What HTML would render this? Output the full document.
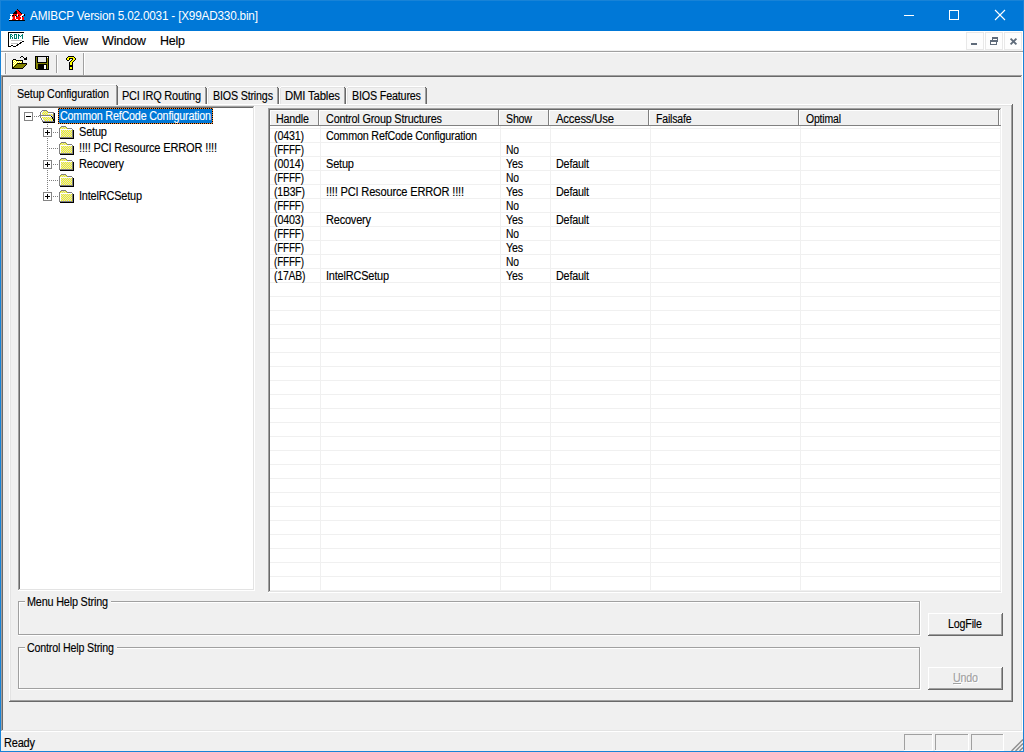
<!DOCTYPE html>
<html>
<head>
<meta charset="utf-8">
<title>AMIBCP Version 5.02.0031 - [X99AD330.bin]</title>
<style>
html,body{margin:0;padding:0;}
body{width:1024px;height:752px;overflow:hidden;background:#f0f0f0;position:relative;
  font-family:"Liberation Sans",sans-serif;font-size:12px;color:#000;}
div,span{box-sizing:border-box;}
.abs{position:absolute;}
.t{position:absolute;white-space:nowrap;line-height:13px;transform-origin:0 0;letter-spacing:-0.2px;-webkit-text-stroke:0.14px currentColor;}
.r{position:absolute;}
</style>
</head>
<body>

<div class="r" style="left:0px;top:0px;width:1024px;height:31px;background:#0078d7;"></div>
<svg class="abs" style="left:9px;top:9px" width="16" height="12" viewBox="0 0 16 12" shape-rendering="crispEdges" ><rect x="8" y="0" width="1" height="1" fill="#000000"/><rect x="7" y="1" width="2" height="1" fill="#ff0000"/><rect x="9" y="1" width="1" height="1" fill="#000000"/><rect x="6" y="2" width="2" height="1" fill="#000000"/><rect x="8" y="2" width="2" height="1" fill="#ff0000"/><rect x="10" y="2" width="1" height="1" fill="#000000"/><rect x="5" y="3" width="3" height="1" fill="#000000"/><rect x="8" y="3" width="3" height="1" fill="#ff0000"/><rect x="11" y="3" width="1" height="1" fill="#000000"/><rect x="4" y="4" width="4" height="1" fill="#000000"/><rect x="8" y="4" width="4" height="1" fill="#ff0000"/><rect x="12" y="4" width="1" height="1" fill="#000000"/><rect x="1" y="5" width="3" height="1" fill="#ffffff"/><rect x="4" y="5" width="4" height="1" fill="#ff0000"/><rect x="8" y="5" width="1" height="1" fill="#ffffff"/><rect x="9" y="5" width="4" height="1" fill="#ff0000"/><rect x="13" y="5" width="2" height="1" fill="#ffffff"/><rect x="15" y="5" width="1" height="1" fill="#000000"/><rect x="2" y="6" width="1" height="1" fill="#ffffff"/><rect x="3" y="6" width="2" height="1" fill="#000000"/><rect x="5" y="6" width="1" height="1" fill="#ff0000"/><rect x="6" y="6" width="1" height="1" fill="#000000"/><rect x="7" y="6" width="1" height="1" fill="#ff0000"/><rect x="8" y="6" width="1" height="1" fill="#ffffff"/><rect x="9" y="6" width="1" height="1" fill="#000000"/><rect x="10" y="6" width="2" height="1" fill="#ff0000"/><rect x="12" y="6" width="2" height="1" fill="#ffffff"/><rect x="14" y="6" width="1" height="1" fill="#0078d7"/><rect x="15" y="6" width="1" height="1" fill="#000000"/><rect x="1" y="7" width="2" height="1" fill="#ffffff"/><rect x="3" y="7" width="3" height="1" fill="#ff0000"/><rect x="6" y="7" width="1" height="1" fill="#ffffff"/><rect x="7" y="7" width="1" height="1" fill="#000000"/><rect x="8" y="7" width="1" height="1" fill="#0078d7"/><rect x="9" y="7" width="2" height="1" fill="#ff0000"/><rect x="11" y="7" width="2" height="1" fill="#ffffff"/><rect x="13" y="7" width="1" height="1" fill="#000000"/><rect x="1" y="8" width="2" height="1" fill="#ffffff"/><rect x="3" y="8" width="1" height="1" fill="#c0c0c0"/><rect x="4" y="8" width="2" height="1" fill="#ff0000"/><rect x="6" y="8" width="1" height="1" fill="#ffffff"/><rect x="7" y="8" width="5" height="1" fill="#ff0000"/><rect x="12" y="8" width="1" height="1" fill="#ffffff"/><rect x="13" y="8" width="2" height="1" fill="#ff0000"/><rect x="1" y="9" width="2" height="1" fill="#ffffff"/><rect x="3" y="9" width="1" height="1" fill="#c0c0c0"/><rect x="4" y="9" width="2" height="1" fill="#ff0000"/><rect x="6" y="9" width="1" height="1" fill="#ffffff"/><rect x="7" y="9" width="5" height="1" fill="#ff0000"/><rect x="12" y="9" width="1" height="1" fill="#ffffff"/><rect x="13" y="9" width="2" height="1" fill="#ff0000"/><rect x="0" y="10" width="3" height="1" fill="#ffffff"/><rect x="3" y="10" width="4" height="1" fill="#ff0000"/><rect x="7" y="10" width="2" height="1" fill="#ffffff"/><rect x="9" y="10" width="2" height="1" fill="#ff0000"/><rect x="11" y="10" width="2" height="1" fill="#ffffff"/><rect x="13" y="10" width="2" height="1" fill="#ff0000"/><rect x="0" y="11" width="16" height="1" fill="#000000"/></svg>
<div class="t" style="left:30px;top:9px;font-size:12px;line-height:15px;color:#fff;-webkit-text-stroke:0;transform:scaleX(0.9802)">AMIBCP Version 5.02.0031 - [X99AD330.bin]</div>
<svg class="abs" style="left:900px;top:5px" width="110" height="20" viewBox="0 0 110 20" shape-rendering="crispEdges"><rect x="4" y="10" width="10" height="1" fill="#fff"/><rect x="49.5" y="5.5" width="9" height="9" fill="none" stroke="#fff" stroke-width="1"/><g shape-rendering="auto" stroke="#fff" stroke-width="1.1"><line x1="95" y1="5" x2="105" y2="15"/><line x1="105" y1="5" x2="95" y2="15"/></g></svg>
<div class="r" style="left:1px;top:31px;width:1022px;height:19px;background:#fff;"></div>
<svg class="abs" style="left:8px;top:32px" width="16" height="15" viewBox="0 0 16 15" shape-rendering="crispEdges" ><rect x="0" y="0" width="16" height="1" fill="#000000"/><rect x="0" y="1" width="1" height="1" fill="#000000"/><rect x="0" y="2" width="1" height="1" fill="#000000"/><rect x="2" y="2" width="2" height="1" fill="#008070"/><rect x="6" y="2" width="3" height="1" fill="#008070"/><rect x="10" y="2" width="1" height="1" fill="#008070"/><rect x="14" y="2" width="1" height="1" fill="#008070"/><rect x="0" y="3" width="1" height="1" fill="#000000"/><rect x="2" y="3" width="1" height="1" fill="#008070"/><rect x="4" y="3" width="1" height="1" fill="#008070"/><rect x="6" y="3" width="1" height="1" fill="#008070"/><rect x="8" y="3" width="1" height="1" fill="#008070"/><rect x="10" y="3" width="2" height="1" fill="#008070"/><rect x="13" y="3" width="2" height="1" fill="#008070"/><rect x="0" y="4" width="1" height="1" fill="#000000"/><rect x="2" y="4" width="2" height="1" fill="#008070"/><rect x="6" y="4" width="1" height="1" fill="#008070"/><rect x="8" y="4" width="1" height="1" fill="#008070"/><rect x="10" y="4" width="1" height="1" fill="#008070"/><rect x="12" y="4" width="1" height="1" fill="#008070"/><rect x="14" y="4" width="1" height="1" fill="#008070"/><rect x="0" y="5" width="1" height="1" fill="#000000"/><rect x="2" y="5" width="1" height="1" fill="#008070"/><rect x="4" y="5" width="1" height="1" fill="#008070"/><rect x="6" y="5" width="1" height="1" fill="#008070"/><rect x="8" y="5" width="1" height="1" fill="#008070"/><rect x="10" y="5" width="1" height="1" fill="#008070"/><rect x="14" y="5" width="1" height="1" fill="#008070"/><rect x="0" y="6" width="1" height="1" fill="#000000"/><rect x="2" y="6" width="1" height="1" fill="#008070"/><rect x="4" y="6" width="1" height="1" fill="#008070"/><rect x="6" y="6" width="3" height="1" fill="#008070"/><rect x="10" y="6" width="1" height="1" fill="#008070"/><rect x="14" y="6" width="1" height="1" fill="#008070"/><rect x="0" y="7" width="1" height="1" fill="#000000"/><rect x="0" y="8" width="1" height="1" fill="#000000"/><rect x="3" y="8" width="11" height="1" fill="#c0c0c0"/><rect x="0" y="9" width="1" height="1" fill="#000000"/><rect x="14" y="9" width="2" height="1" fill="#000000"/><rect x="0" y="10" width="1" height="1" fill="#000000"/><rect x="12" y="10" width="2" height="1" fill="#000000"/><rect x="0" y="11" width="1" height="1" fill="#000000"/><rect x="3" y="11" width="7" height="1" fill="#c0c0c0"/><rect x="11" y="11" width="2" height="1" fill="#000000"/><rect x="0" y="12" width="1" height="1" fill="#000000"/><rect x="9" y="12" width="2" height="1" fill="#000000"/><rect x="0" y="13" width="1" height="1" fill="#000000"/><rect x="3" y="13" width="2" height="1" fill="#000000"/><rect x="8" y="13" width="2" height="1" fill="#000000"/><rect x="0" y="14" width="3" height="1" fill="#000000"/><rect x="5" y="14" width="3" height="1" fill="#000000"/></svg>
<div class="t" style="left:31.6px;top:34px;font-size:12px;line-height:15px;transform:scaleX(0.9282)">File</div>
<div class="t" style="left:63px;top:34px;font-size:12px;line-height:15px;transform:scaleX(0.9921)">View</div>
<div class="t" style="left:102px;top:34px;font-size:12px;line-height:15px;transform:scaleX(1.0556)">Window</div>
<div class="t" style="left:160px;top:34px;font-size:12px;line-height:15px;transform:scaleX(1.0377)">Help</div>
<div class="r" style="left:966px;top:32px;width:18px;height:18px;background:#fdfdfd;border:1px solid #e8e8e8"></div>
<div class="r" style="left:985px;top:32px;width:18px;height:18px;background:#fdfdfd;border:1px solid #e8e8e8"></div>
<div class="r" style="left:1004px;top:32px;width:18px;height:18px;background:#fdfdfd;border:1px solid #e8e8e8"></div>
<svg class="abs" style="left:966px;top:32px" width="56" height="18" viewBox="0 0 56 18"><g fill="#5f6b7a" shape-rendering="crispEdges"><rect x="5" y="11" width="6" height="2"/><rect x="26" y="5" width="6" height="2"/><rect x="31" y="5" width="1" height="5"/><rect x="26" y="5" width="1" height="3"/><rect x="24" y="8" width="7" height="5"/><rect x="25" y="10" width="5" height="2" fill="#fdfdfd"/></g><g stroke="#5f6b7a" stroke-width="1.9"><line x1="44.6" y1="6.6" x2="50.4" y2="12.4"/><line x1="50.4" y1="6.6" x2="44.6" y2="12.4"/></g></svg>
<div class="r" style="left:1px;top:51px;width:1022px;height:1px;background:#a0a0a0;"></div>
<div class="r" style="left:1px;top:52px;width:1022px;height:1px;background:#ffffff;"></div>
<div class="r" style="left:1px;top:53px;width:4px;height:22px;background:#f9f9f9;"></div>
<div class="r" style="left:5px;top:53px;width:1px;height:21px;background:#a0a0a0;"></div>
<div class="r" style="left:6px;top:53px;width:1px;height:21px;background:#f8f8f8;"></div>
<div class="r" style="left:1022px;top:53px;width:1px;height:22px;background:#ffffff;"></div>
<svg class="abs" style="left:12px;top:56px" width="15" height="13" viewBox="0 0 15 13" shape-rendering="crispEdges" ><rect x="9" y="0" width="2" height="1" fill="#000000"/><rect x="8" y="1" width="1" height="1" fill="#000000"/><rect x="11" y="1" width="1" height="1" fill="#000000"/><rect x="14" y="1" width="1" height="1" fill="#000000"/><rect x="12" y="2" width="3" height="1" fill="#000000"/><rect x="1" y="3" width="3" height="1" fill="#000000"/><rect x="12" y="3" width="3" height="1" fill="#000000"/><rect x="0" y="4" width="1" height="1" fill="#000000"/><rect x="1" y="4" width="1" height="1" fill="#ffff00"/><rect x="2" y="4" width="1" height="1" fill="#ffffff"/><rect x="3" y="4" width="1" height="1" fill="#ffff00"/><rect x="4" y="4" width="7" height="1" fill="#000000"/><rect x="0" y="5" width="1" height="1" fill="#000000"/><rect x="1" y="5" width="1" height="1" fill="#ffffff"/><rect x="2" y="5" width="1" height="1" fill="#ffff00"/><rect x="3" y="5" width="1" height="1" fill="#ffffff"/><rect x="4" y="5" width="1" height="1" fill="#ffff00"/><rect x="5" y="5" width="1" height="1" fill="#ffffff"/><rect x="6" y="5" width="1" height="1" fill="#ffff00"/><rect x="7" y="5" width="1" height="1" fill="#ffffff"/><rect x="8" y="5" width="1" height="1" fill="#ffff00"/><rect x="9" y="5" width="1" height="1" fill="#ffffff"/><rect x="10" y="5" width="1" height="1" fill="#000000"/><rect x="0" y="6" width="1" height="1" fill="#000000"/><rect x="1" y="6" width="1" height="1" fill="#ffff00"/><rect x="2" y="6" width="1" height="1" fill="#ffffff"/><rect x="3" y="6" width="1" height="1" fill="#ffff00"/><rect x="4" y="6" width="1" height="1" fill="#ffffff"/><rect x="5" y="6" width="1" height="1" fill="#ffff00"/><rect x="6" y="6" width="1" height="1" fill="#ffffff"/><rect x="7" y="6" width="1" height="1" fill="#ffff00"/><rect x="8" y="6" width="1" height="1" fill="#ffffff"/><rect x="9" y="6" width="1" height="1" fill="#ffff00"/><rect x="10" y="6" width="1" height="1" fill="#000000"/><rect x="0" y="7" width="1" height="1" fill="#000000"/><rect x="1" y="7" width="1" height="1" fill="#ffffff"/><rect x="2" y="7" width="1" height="1" fill="#ffff00"/><rect x="3" y="7" width="1" height="1" fill="#ffffff"/><rect x="4" y="7" width="1" height="1" fill="#ffff00"/><rect x="5" y="7" width="10" height="1" fill="#000000"/><rect x="0" y="8" width="1" height="1" fill="#000000"/><rect x="1" y="8" width="1" height="1" fill="#ffff00"/><rect x="2" y="8" width="1" height="1" fill="#ffffff"/><rect x="3" y="8" width="1" height="1" fill="#ffff00"/><rect x="4" y="8" width="1" height="1" fill="#000000"/><rect x="5" y="8" width="9" height="1" fill="#808000"/><rect x="14" y="8" width="1" height="1" fill="#000000"/><rect x="0" y="9" width="1" height="1" fill="#000000"/><rect x="1" y="9" width="1" height="1" fill="#ffffff"/><rect x="2" y="9" width="1" height="1" fill="#ffff00"/><rect x="3" y="9" width="1" height="1" fill="#000000"/><rect x="4" y="9" width="9" height="1" fill="#808000"/><rect x="13" y="9" width="1" height="1" fill="#000000"/><rect x="0" y="10" width="1" height="1" fill="#000000"/><rect x="1" y="10" width="1" height="1" fill="#ffff00"/><rect x="2" y="10" width="1" height="1" fill="#000000"/><rect x="3" y="10" width="9" height="1" fill="#808000"/><rect x="12" y="10" width="1" height="1" fill="#000000"/><rect x="0" y="11" width="2" height="1" fill="#000000"/><rect x="2" y="11" width="9" height="1" fill="#808000"/><rect x="11" y="11" width="1" height="1" fill="#000000"/><rect x="0" y="12" width="11" height="1" fill="#000000"/></svg>
<svg class="abs" style="left:35px;top:56px" width="14" height="14" viewBox="0 0 14 14" shape-rendering="crispEdges" ><rect x="0" y="0" width="14" height="1" fill="#000000"/><rect x="0" y="1" width="1" height="1" fill="#000000"/><rect x="1" y="1" width="1" height="1" fill="#808000"/><rect x="2" y="1" width="1" height="1" fill="#000000"/><rect x="3" y="1" width="8" height="1" fill="#e6e6e6"/><rect x="11" y="1" width="1" height="1" fill="#000000"/><rect x="12" y="1" width="1" height="1" fill="#ffffff"/><rect x="13" y="1" width="1" height="1" fill="#000000"/><rect x="0" y="2" width="1" height="1" fill="#000000"/><rect x="1" y="2" width="1" height="1" fill="#808000"/><rect x="2" y="2" width="1" height="1" fill="#000000"/><rect x="3" y="2" width="8" height="1" fill="#e6e6e6"/><rect x="11" y="2" width="1" height="1" fill="#000000"/><rect x="12" y="2" width="1" height="1" fill="#808000"/><rect x="13" y="2" width="1" height="1" fill="#000000"/><rect x="0" y="3" width="1" height="1" fill="#000000"/><rect x="1" y="3" width="1" height="1" fill="#808000"/><rect x="2" y="3" width="1" height="1" fill="#000000"/><rect x="3" y="3" width="8" height="1" fill="#e6e6e6"/><rect x="11" y="3" width="1" height="1" fill="#000000"/><rect x="12" y="3" width="1" height="1" fill="#808000"/><rect x="13" y="3" width="1" height="1" fill="#000000"/><rect x="0" y="4" width="1" height="1" fill="#000000"/><rect x="1" y="4" width="1" height="1" fill="#808000"/><rect x="2" y="4" width="1" height="1" fill="#000000"/><rect x="3" y="4" width="8" height="1" fill="#e6e6e6"/><rect x="11" y="4" width="1" height="1" fill="#000000"/><rect x="12" y="4" width="1" height="1" fill="#808000"/><rect x="13" y="4" width="1" height="1" fill="#000000"/><rect x="0" y="5" width="1" height="1" fill="#000000"/><rect x="1" y="5" width="1" height="1" fill="#808000"/><rect x="2" y="5" width="1" height="1" fill="#000000"/><rect x="3" y="5" width="8" height="1" fill="#e6e6e6"/><rect x="11" y="5" width="1" height="1" fill="#000000"/><rect x="12" y="5" width="1" height="1" fill="#808000"/><rect x="13" y="5" width="1" height="1" fill="#000000"/><rect x="0" y="6" width="1" height="1" fill="#000000"/><rect x="1" y="6" width="1" height="1" fill="#808000"/><rect x="2" y="6" width="10" height="1" fill="#000000"/><rect x="12" y="6" width="1" height="1" fill="#808000"/><rect x="13" y="6" width="1" height="1" fill="#000000"/><rect x="0" y="7" width="1" height="1" fill="#000000"/><rect x="1" y="7" width="12" height="1" fill="#808000"/><rect x="13" y="7" width="1" height="1" fill="#000000"/><rect x="0" y="8" width="1" height="1" fill="#000000"/><rect x="1" y="8" width="2" height="1" fill="#808000"/><rect x="3" y="8" width="9" height="1" fill="#000000"/><rect x="12" y="8" width="1" height="1" fill="#808000"/><rect x="13" y="8" width="1" height="1" fill="#000000"/><rect x="0" y="9" width="1" height="1" fill="#000000"/><rect x="1" y="9" width="2" height="1" fill="#808000"/><rect x="3" y="9" width="6" height="1" fill="#000000"/><rect x="9" y="9" width="2" height="1" fill="#ffffff"/><rect x="11" y="9" width="1" height="1" fill="#000000"/><rect x="12" y="9" width="1" height="1" fill="#808000"/><rect x="13" y="9" width="1" height="1" fill="#000000"/><rect x="0" y="10" width="1" height="1" fill="#000000"/><rect x="1" y="10" width="2" height="1" fill="#808000"/><rect x="3" y="10" width="6" height="1" fill="#000000"/><rect x="9" y="10" width="2" height="1" fill="#ffffff"/><rect x="11" y="10" width="1" height="1" fill="#000000"/><rect x="12" y="10" width="1" height="1" fill="#808000"/><rect x="13" y="10" width="1" height="1" fill="#000000"/><rect x="0" y="11" width="1" height="1" fill="#000000"/><rect x="1" y="11" width="2" height="1" fill="#808000"/><rect x="3" y="11" width="6" height="1" fill="#000000"/><rect x="9" y="11" width="2" height="1" fill="#ffffff"/><rect x="11" y="11" width="1" height="1" fill="#000000"/><rect x="12" y="11" width="1" height="1" fill="#808000"/><rect x="13" y="11" width="1" height="1" fill="#000000"/><rect x="0" y="12" width="1" height="1" fill="#000000"/><rect x="1" y="12" width="2" height="1" fill="#808000"/><rect x="3" y="12" width="6" height="1" fill="#000000"/><rect x="9" y="12" width="2" height="1" fill="#ffffff"/><rect x="11" y="12" width="1" height="1" fill="#000000"/><rect x="12" y="12" width="1" height="1" fill="#808000"/><rect x="13" y="12" width="1" height="1" fill="#000000"/><rect x="1" y="13" width="13" height="1" fill="#000000"/></svg>
<div class="r" style="left:56px;top:55px;width:1px;height:18px;background:#a0a0a0;"></div>
<div class="r" style="left:57px;top:55px;width:1px;height:18px;background:#ffffff;"></div>
<svg class="abs" style="left:66px;top:56px" width="10" height="14" viewBox="0 0 10 14" shape-rendering="crispEdges" ><rect x="2" y="0" width="6" height="1" fill="#000000"/><rect x="1" y="1" width="1" height="1" fill="#000000"/><rect x="2" y="1" width="6" height="1" fill="#ffff00"/><rect x="8" y="1" width="1" height="1" fill="#000000"/><rect x="0" y="2" width="1" height="1" fill="#000000"/><rect x="1" y="2" width="2" height="1" fill="#ffff00"/><rect x="3" y="2" width="4" height="1" fill="#000000"/><rect x="7" y="2" width="2" height="1" fill="#ffff00"/><rect x="9" y="2" width="1" height="1" fill="#000000"/><rect x="0" y="3" width="1" height="1" fill="#000000"/><rect x="1" y="3" width="2" height="1" fill="#ffff00"/><rect x="3" y="3" width="1" height="1" fill="#000000"/><rect x="6" y="3" width="1" height="1" fill="#000000"/><rect x="7" y="3" width="2" height="1" fill="#ffff00"/><rect x="9" y="3" width="1" height="1" fill="#000000"/><rect x="1" y="4" width="2" height="1" fill="#000000"/><rect x="5" y="4" width="1" height="1" fill="#000000"/><rect x="6" y="4" width="2" height="1" fill="#ffff00"/><rect x="8" y="4" width="1" height="1" fill="#000000"/><rect x="4" y="5" width="1" height="1" fill="#000000"/><rect x="5" y="5" width="2" height="1" fill="#ffff00"/><rect x="7" y="5" width="1" height="1" fill="#000000"/><rect x="3" y="6" width="1" height="1" fill="#000000"/><rect x="4" y="6" width="2" height="1" fill="#ffff00"/><rect x="6" y="6" width="1" height="1" fill="#000000"/><rect x="3" y="7" width="1" height="1" fill="#000000"/><rect x="4" y="7" width="2" height="1" fill="#ffff00"/><rect x="6" y="7" width="1" height="1" fill="#000000"/><rect x="3" y="8" width="1" height="1" fill="#000000"/><rect x="4" y="8" width="2" height="1" fill="#ffff00"/><rect x="6" y="8" width="1" height="1" fill="#000000"/><rect x="3" y="9" width="4" height="1" fill="#000000"/><rect x="3" y="10" width="4" height="1" fill="#000000"/><rect x="3" y="11" width="1" height="1" fill="#000000"/><rect x="4" y="11" width="2" height="1" fill="#ffff00"/><rect x="6" y="11" width="1" height="1" fill="#000000"/><rect x="3" y="12" width="1" height="1" fill="#000000"/><rect x="4" y="12" width="2" height="1" fill="#ffff00"/><rect x="6" y="12" width="1" height="1" fill="#000000"/><rect x="3" y="13" width="4" height="1" fill="#000000"/></svg>
<div class="r" style="left:83px;top:53px;width:1px;height:22px;background:#a0a0a0;"></div>
<div class="r" style="left:84px;top:53px;width:1px;height:22px;background:#ffffff;"></div>
<div class="r" style="left:1px;top:75px;width:1021px;height:1px;background:#a0a0a0;"></div><div class="r" style="left:1px;top:75px;width:1px;height:656px;background:#a0a0a0;"></div><div class="r" style="left:2px;top:76px;width:1019px;height:1px;background:#696969;"></div><div class="r" style="left:2px;top:76px;width:1px;height:654px;background:#696969;"></div><div class="r" style="left:1px;top:731px;width:1022px;height:1px;background:#ffffff;"></div><div class="r" style="left:1022px;top:75px;width:1px;height:657px;background:#ffffff;"></div><div class="r" style="left:2px;top:730px;width:1020px;height:1px;background:#e3e3e3;"></div><div class="r" style="left:1021px;top:76px;width:1px;height:655px;background:#e3e3e3;"></div>
<div class="r" style="left:9px;top:104px;width:1003px;height:1px;background:#ffffff;"></div><div class="r" style="left:9px;top:104px;width:1px;height:597px;background:#ffffff;"></div><div class="r" style="left:9px;top:701px;width:1004px;height:1px;background:#696969;"></div><div class="r" style="left:1012px;top:104px;width:1px;height:598px;background:#696969;"></div><div class="r" style="left:10px;top:700px;width:1002px;height:1px;background:#a0a0a0;"></div><div class="r" style="left:1011px;top:105px;width:1px;height:596px;background:#a0a0a0;"></div>
<div class="r" style="left:10px;top:105px;width:1001px;height:1px;background:#e3e3e3;"></div>
<div class="r" style="left:10px;top:105px;width:1px;height:595px;background:#e3e3e3;"></div>
<div class="r" style="left:118px;top:86px;width:87px;height:1px;background:#ffffff;"></div>
<div class="r" style="left:118px;top:87px;width:87px;height:1px;background:#e3e3e3;"></div>
<div class="r" style="left:117px;top:87px;width:1px;height:1px;background:#ffffff;"></div>
<div class="r" style="left:116px;top:88px;width:1px;height:16px;background:#ffffff;"></div>
<div class="r" style="left:117px;top:88px;width:1px;height:16px;background:#e3e3e3;"></div>
<div class="r" style="left:206px;top:88px;width:1px;height:16px;background:#696969;"></div>
<div class="r" style="left:205px;top:87px;width:1px;height:1px;background:#696969;"></div>
<div class="r" style="left:205px;top:88px;width:1px;height:16px;background:#a0a0a0;"></div>
<div class="t" style="left:122px;top:90px;transform:scaleX(0.9125)">PCI IRQ Routing</div>
<div class="r" style="left:209px;top:86px;width:68px;height:1px;background:#ffffff;"></div>
<div class="r" style="left:209px;top:87px;width:68px;height:1px;background:#e3e3e3;"></div>
<div class="r" style="left:208px;top:87px;width:1px;height:1px;background:#ffffff;"></div>
<div class="r" style="left:207px;top:88px;width:1px;height:16px;background:#ffffff;"></div>
<div class="r" style="left:208px;top:88px;width:1px;height:16px;background:#e3e3e3;"></div>
<div class="r" style="left:278px;top:88px;width:1px;height:16px;background:#696969;"></div>
<div class="r" style="left:277px;top:87px;width:1px;height:1px;background:#696969;"></div>
<div class="r" style="left:277px;top:88px;width:1px;height:16px;background:#a0a0a0;"></div>
<div class="t" style="left:213px;top:90px;transform:scaleX(0.8933)">BIOS Strings</div>
<div class="r" style="left:281px;top:86px;width:63px;height:1px;background:#ffffff;"></div>
<div class="r" style="left:281px;top:87px;width:63px;height:1px;background:#e3e3e3;"></div>
<div class="r" style="left:280px;top:87px;width:1px;height:1px;background:#ffffff;"></div>
<div class="r" style="left:279px;top:88px;width:1px;height:16px;background:#ffffff;"></div>
<div class="r" style="left:280px;top:88px;width:1px;height:16px;background:#e3e3e3;"></div>
<div class="r" style="left:345px;top:88px;width:1px;height:16px;background:#696969;"></div>
<div class="r" style="left:344px;top:87px;width:1px;height:1px;background:#696969;"></div>
<div class="r" style="left:344px;top:88px;width:1px;height:16px;background:#a0a0a0;"></div>
<div class="t" style="left:285px;top:90px;transform:scaleX(0.9481)">DMI Tables</div>
<div class="r" style="left:348px;top:86px;width:77px;height:1px;background:#ffffff;"></div>
<div class="r" style="left:348px;top:87px;width:77px;height:1px;background:#e3e3e3;"></div>
<div class="r" style="left:347px;top:87px;width:1px;height:1px;background:#ffffff;"></div>
<div class="r" style="left:346px;top:88px;width:1px;height:16px;background:#ffffff;"></div>
<div class="r" style="left:347px;top:88px;width:1px;height:16px;background:#e3e3e3;"></div>
<div class="r" style="left:426px;top:88px;width:1px;height:16px;background:#696969;"></div>
<div class="r" style="left:425px;top:87px;width:1px;height:1px;background:#696969;"></div>
<div class="r" style="left:425px;top:88px;width:1px;height:16px;background:#a0a0a0;"></div>
<div class="t" style="left:352px;top:90px;transform:scaleX(0.8965)">BIOS Features</div>
<div class="r" style="left:9px;top:84px;width:109px;height:22px;background:#f0f0f0;"></div>
<div class="r" style="left:11px;top:84px;width:105px;height:1px;background:#ffffff;"></div>
<div class="r" style="left:11px;top:85px;width:105px;height:1px;background:#e3e3e3;"></div>
<div class="r" style="left:10px;top:85px;width:1px;height:1px;background:#ffffff;"></div>
<div class="r" style="left:9px;top:86px;width:1px;height:20px;background:#ffffff;"></div>
<div class="r" style="left:10px;top:86px;width:1px;height:20px;background:#e3e3e3;"></div>
<div class="r" style="left:117px;top:86px;width:1px;height:19px;background:#696969;"></div>
<div class="r" style="left:116px;top:85px;width:1px;height:1px;background:#696969;"></div>
<div class="r" style="left:116px;top:86px;width:1px;height:19px;background:#a0a0a0;"></div>
<div class="t" style="left:17px;top:88px;transform:scaleX(0.8977)">Setup Configuration</div>
<div class="r" style="left:20px;top:108px;width:233px;height:481px;background:#ffffff;"></div>
<div class="r" style="left:18px;top:106px;width:236px;height:1px;background:#a0a0a0;"></div><div class="r" style="left:18px;top:106px;width:1px;height:484px;background:#a0a0a0;"></div><div class="r" style="left:19px;top:107px;width:234px;height:1px;background:#696969;"></div><div class="r" style="left:19px;top:107px;width:1px;height:482px;background:#696969;"></div><div class="r" style="left:18px;top:590px;width:237px;height:1px;background:#ffffff;"></div><div class="r" style="left:254px;top:106px;width:1px;height:485px;background:#ffffff;"></div><div class="r" style="left:19px;top:589px;width:235px;height:1px;background:#e3e3e3;"></div><div class="r" style="left:253px;top:107px;width:1px;height:483px;background:#e3e3e3;"></div>
<div class="r" style="left:58px;top:108px;width:155px;height:16px;background:#0078d7;"></div>
<div class="r" style="left:58px;top:108px;width:155px;height:1px;background:repeating-linear-gradient(90deg,#ff8728 0 1px,#000 1px 2px)"></div>
<div class="r" style="left:58px;top:123px;width:155px;height:1px;background:repeating-linear-gradient(90deg,#000 0 1px,#ff8728 1px 2px)"></div>
<div class="r" style="left:58px;top:108px;width:1px;height:16px;background:repeating-linear-gradient(180deg,#ff8728 0 1px,#000 1px 2px)"></div>
<div class="r" style="left:212px;top:108px;width:1px;height:16px;background:repeating-linear-gradient(180deg,#ff8728 0 1px,#000 1px 2px)"></div>
<div class="t" style="left:60px;top:110px;color:#fff;transform:scaleX(0.8951)">Common RefCode Configuration</div>
<div class="r" style="left:24px;top:112px;width:9px;height:9px;border:1px solid #848484;background:#fff"></div><div class="r" style="left:26px;top:116px;width:5px;height:1px;background:#000;"></div>
<div class="r" style="left:34px;top:116px;width:5px;height:1px;background:repeating-linear-gradient(90deg,#808080 0 1px,transparent 1px 2px)"></div>
<svg class="abs" style="left:39px;top:110px" width="16" height="13" viewBox="0 0 16 13" shape-rendering="crispEdges" ><rect x="3" y="0" width="5" height="1" fill="#808080"/><rect x="2" y="1" width="1" height="1" fill="#808080"/><rect x="3" y="1" width="1" height="1" fill="#ffffff"/><rect x="4" y="1" width="1" height="1" fill="#d4d4e4"/><rect x="5" y="1" width="1" height="1" fill="#ffff00"/><rect x="6" y="1" width="1" height="1" fill="#d4d4e4"/><rect x="7" y="1" width="1" height="1" fill="#ffff00"/><rect x="8" y="1" width="1" height="1" fill="#808080"/><rect x="1" y="2" width="1" height="1" fill="#808080"/><rect x="2" y="2" width="1" height="1" fill="#ffffff"/><rect x="3" y="2" width="1" height="1" fill="#d4d4e4"/><rect x="4" y="2" width="1" height="1" fill="#ffff00"/><rect x="5" y="2" width="1" height="1" fill="#d4d4e4"/><rect x="6" y="2" width="1" height="1" fill="#ffff00"/><rect x="7" y="2" width="1" height="1" fill="#d4d4e4"/><rect x="8" y="2" width="1" height="1" fill="#ffff00"/><rect x="9" y="2" width="6" height="1" fill="#808080"/><rect x="1" y="3" width="1" height="1" fill="#808080"/><rect x="2" y="3" width="1" height="1" fill="#ffffff"/><rect x="3" y="3" width="1" height="1" fill="#ffff00"/><rect x="4" y="3" width="1" height="1" fill="#d4d4e4"/><rect x="5" y="3" width="1" height="1" fill="#ffff00"/><rect x="6" y="3" width="1" height="1" fill="#d4d4e4"/><rect x="7" y="3" width="1" height="1" fill="#ffff00"/><rect x="8" y="3" width="1" height="1" fill="#d4d4e4"/><rect x="9" y="3" width="5" height="1" fill="#ffffff"/><rect x="14" y="3" width="1" height="1" fill="#808080"/><rect x="15" y="3" width="1" height="1" fill="#000000"/><rect x="1" y="4" width="1" height="1" fill="#808080"/><rect x="2" y="4" width="1" height="1" fill="#ffffff"/><rect x="3" y="4" width="1" height="1" fill="#d4d4e4"/><rect x="4" y="4" width="1" height="1" fill="#ffff00"/><rect x="5" y="4" width="1" height="1" fill="#d4d4e4"/><rect x="6" y="4" width="1" height="1" fill="#ffff00"/><rect x="7" y="4" width="1" height="1" fill="#d4d4e4"/><rect x="8" y="4" width="1" height="1" fill="#ffff00"/><rect x="9" y="4" width="1" height="1" fill="#d4d4e4"/><rect x="10" y="4" width="1" height="1" fill="#ffff00"/><rect x="11" y="4" width="1" height="1" fill="#d4d4e4"/><rect x="12" y="4" width="1" height="1" fill="#ffff00"/><rect x="13" y="4" width="1" height="1" fill="#d4d4e4"/><rect x="14" y="4" width="1" height="1" fill="#808080"/><rect x="15" y="4" width="1" height="1" fill="#000000"/><rect x="0" y="5" width="12" height="1" fill="#808080"/><rect x="12" y="5" width="1" height="1" fill="#d4d4e4"/><rect x="13" y="5" width="1" height="1" fill="#ffff00"/><rect x="14" y="5" width="1" height="1" fill="#808080"/><rect x="15" y="5" width="1" height="1" fill="#000000"/><rect x="1" y="6" width="1" height="1" fill="#808080"/><rect x="2" y="6" width="10" height="1" fill="#ffffff"/><rect x="12" y="6" width="1" height="1" fill="#000000"/><rect x="13" y="6" width="1" height="1" fill="#d4d4e4"/><rect x="14" y="6" width="1" height="1" fill="#808080"/><rect x="15" y="6" width="1" height="1" fill="#000000"/><rect x="1" y="7" width="1" height="1" fill="#808080"/><rect x="2" y="7" width="1" height="1" fill="#ffffff"/><rect x="3" y="7" width="1" height="1" fill="#ffff00"/><rect x="4" y="7" width="1" height="1" fill="#d4d4e4"/><rect x="5" y="7" width="1" height="1" fill="#ffff00"/><rect x="6" y="7" width="1" height="1" fill="#d4d4e4"/><rect x="7" y="7" width="1" height="1" fill="#ffff00"/><rect x="8" y="7" width="1" height="1" fill="#d4d4e4"/><rect x="9" y="7" width="1" height="1" fill="#ffff00"/><rect x="10" y="7" width="1" height="1" fill="#d4d4e4"/><rect x="11" y="7" width="1" height="1" fill="#ffff00"/><rect x="12" y="7" width="1" height="1" fill="#d4d4e4"/><rect x="13" y="7" width="1" height="1" fill="#000000"/><rect x="14" y="7" width="1" height="1" fill="#808080"/><rect x="15" y="7" width="1" height="1" fill="#000000"/><rect x="2" y="8" width="1" height="1" fill="#808080"/><rect x="3" y="8" width="1" height="1" fill="#ffffff"/><rect x="4" y="8" width="1" height="1" fill="#ffff00"/><rect x="5" y="8" width="1" height="1" fill="#d4d4e4"/><rect x="6" y="8" width="1" height="1" fill="#ffff00"/><rect x="7" y="8" width="1" height="1" fill="#d4d4e4"/><rect x="8" y="8" width="1" height="1" fill="#ffff00"/><rect x="9" y="8" width="1" height="1" fill="#d4d4e4"/><rect x="10" y="8" width="1" height="1" fill="#ffff00"/><rect x="11" y="8" width="1" height="1" fill="#d4d4e4"/><rect x="12" y="8" width="1" height="1" fill="#ffff00"/><rect x="13" y="8" width="1" height="1" fill="#000000"/><rect x="14" y="8" width="1" height="1" fill="#808080"/><rect x="15" y="8" width="1" height="1" fill="#000000"/><rect x="2" y="9" width="1" height="1" fill="#808080"/><rect x="3" y="9" width="1" height="1" fill="#ffffff"/><rect x="4" y="9" width="1" height="1" fill="#d4d4e4"/><rect x="5" y="9" width="1" height="1" fill="#ffff00"/><rect x="6" y="9" width="1" height="1" fill="#d4d4e4"/><rect x="7" y="9" width="1" height="1" fill="#ffff00"/><rect x="8" y="9" width="1" height="1" fill="#d4d4e4"/><rect x="9" y="9" width="1" height="1" fill="#ffff00"/><rect x="10" y="9" width="1" height="1" fill="#d4d4e4"/><rect x="11" y="9" width="1" height="1" fill="#ffff00"/><rect x="12" y="9" width="1" height="1" fill="#d4d4e4"/><rect x="13" y="9" width="1" height="1" fill="#ffff00"/><rect x="14" y="9" width="2" height="1" fill="#000000"/><rect x="3" y="10" width="1" height="1" fill="#808080"/><rect x="4" y="10" width="1" height="1" fill="#ffffff"/><rect x="5" y="10" width="1" height="1" fill="#d4d4e4"/><rect x="6" y="10" width="1" height="1" fill="#ffff00"/><rect x="7" y="10" width="1" height="1" fill="#d4d4e4"/><rect x="8" y="10" width="1" height="1" fill="#ffff00"/><rect x="9" y="10" width="1" height="1" fill="#d4d4e4"/><rect x="10" y="10" width="1" height="1" fill="#ffff00"/><rect x="11" y="10" width="1" height="1" fill="#d4d4e4"/><rect x="12" y="10" width="1" height="1" fill="#ffff00"/><rect x="13" y="10" width="1" height="1" fill="#d4d4e4"/><rect x="14" y="10" width="2" height="1" fill="#000000"/><rect x="3" y="11" width="12" height="1" fill="#808080"/><rect x="15" y="11" width="1" height="1" fill="#000000"/><rect x="4" y="12" width="12" height="1" fill="#000000"/></svg>
<div class="r" style="left:47px;top:124px;width:1px;height:73px;background:repeating-linear-gradient(180deg,#808080 0 1px,transparent 1px 2px)"></div>
<div class="r" style="left:43px;top:128px;width:9px;height:9px;border:1px solid #848484;background:#fff"></div><div class="r" style="left:45px;top:132px;width:5px;height:1px;background:#000;"></div><div class="r" style="left:47px;top:130px;width:1px;height:5px;background:#000;"></div>
<div class="r" style="left:53px;top:132px;width:5px;height:1px;background:repeating-linear-gradient(90deg,#808080 0 1px,transparent 1px 2px)"></div>
<svg class="abs" style="left:59px;top:126px" width="15" height="13" viewBox="0 0 15 13" shape-rendering="crispEdges" ><rect x="2" y="0" width="5" height="1" fill="#808080"/><rect x="1" y="1" width="1" height="1" fill="#808080"/><rect x="2" y="1" width="1" height="1" fill="#ffff00"/><rect x="3" y="1" width="1" height="1" fill="#d4d4e4"/><rect x="4" y="1" width="1" height="1" fill="#ffff00"/><rect x="5" y="1" width="1" height="1" fill="#d4d4e4"/><rect x="6" y="1" width="1" height="1" fill="#ffff00"/><rect x="7" y="1" width="1" height="1" fill="#808080"/><rect x="0" y="2" width="1" height="1" fill="#808080"/><rect x="1" y="2" width="1" height="1" fill="#ffff00"/><rect x="2" y="2" width="1" height="1" fill="#d4d4e4"/><rect x="3" y="2" width="1" height="1" fill="#ffff00"/><rect x="4" y="2" width="1" height="1" fill="#d4d4e4"/><rect x="5" y="2" width="1" height="1" fill="#ffff00"/><rect x="6" y="2" width="1" height="1" fill="#d4d4e4"/><rect x="7" y="2" width="1" height="1" fill="#ffff00"/><rect x="8" y="2" width="5" height="1" fill="#808080"/><rect x="0" y="3" width="1" height="1" fill="#808080"/><rect x="1" y="3" width="12" height="1" fill="#ffffff"/><rect x="13" y="3" width="1" height="1" fill="#808080"/><rect x="0" y="4" width="1" height="1" fill="#808080"/><rect x="1" y="4" width="1" height="1" fill="#ffffff"/><rect x="2" y="4" width="1" height="1" fill="#ffff00"/><rect x="3" y="4" width="1" height="1" fill="#d4d4e4"/><rect x="4" y="4" width="1" height="1" fill="#ffff00"/><rect x="5" y="4" width="1" height="1" fill="#d4d4e4"/><rect x="6" y="4" width="1" height="1" fill="#ffff00"/><rect x="7" y="4" width="1" height="1" fill="#d4d4e4"/><rect x="8" y="4" width="1" height="1" fill="#ffff00"/><rect x="9" y="4" width="1" height="1" fill="#d4d4e4"/><rect x="10" y="4" width="1" height="1" fill="#ffff00"/><rect x="11" y="4" width="1" height="1" fill="#d4d4e4"/><rect x="12" y="4" width="1" height="1" fill="#ffff00"/><rect x="13" y="4" width="1" height="1" fill="#808080"/><rect x="14" y="4" width="1" height="1" fill="#000000"/><rect x="0" y="5" width="1" height="1" fill="#808080"/><rect x="1" y="5" width="1" height="1" fill="#ffffff"/><rect x="2" y="5" width="1" height="1" fill="#d4d4e4"/><rect x="3" y="5" width="1" height="1" fill="#ffff00"/><rect x="4" y="5" width="1" height="1" fill="#d4d4e4"/><rect x="5" y="5" width="1" height="1" fill="#ffff00"/><rect x="6" y="5" width="1" height="1" fill="#d4d4e4"/><rect x="7" y="5" width="1" height="1" fill="#ffff00"/><rect x="8" y="5" width="1" height="1" fill="#d4d4e4"/><rect x="9" y="5" width="1" height="1" fill="#ffff00"/><rect x="10" y="5" width="1" height="1" fill="#d4d4e4"/><rect x="11" y="5" width="1" height="1" fill="#ffff00"/><rect x="12" y="5" width="1" height="1" fill="#d4d4e4"/><rect x="13" y="5" width="1" height="1" fill="#808080"/><rect x="14" y="5" width="1" height="1" fill="#000000"/><rect x="0" y="6" width="1" height="1" fill="#808080"/><rect x="1" y="6" width="1" height="1" fill="#ffffff"/><rect x="2" y="6" width="1" height="1" fill="#ffff00"/><rect x="3" y="6" width="1" height="1" fill="#d4d4e4"/><rect x="4" y="6" width="1" height="1" fill="#ffff00"/><rect x="5" y="6" width="1" height="1" fill="#d4d4e4"/><rect x="6" y="6" width="1" height="1" fill="#ffff00"/><rect x="7" y="6" width="1" height="1" fill="#d4d4e4"/><rect x="8" y="6" width="1" height="1" fill="#ffff00"/><rect x="9" y="6" width="1" height="1" fill="#d4d4e4"/><rect x="10" y="6" width="1" height="1" fill="#ffff00"/><rect x="11" y="6" width="1" height="1" fill="#d4d4e4"/><rect x="12" y="6" width="1" height="1" fill="#ffff00"/><rect x="13" y="6" width="1" height="1" fill="#808080"/><rect x="14" y="6" width="1" height="1" fill="#000000"/><rect x="0" y="7" width="1" height="1" fill="#808080"/><rect x="1" y="7" width="1" height="1" fill="#ffffff"/><rect x="2" y="7" width="1" height="1" fill="#d4d4e4"/><rect x="3" y="7" width="1" height="1" fill="#ffff00"/><rect x="4" y="7" width="1" height="1" fill="#d4d4e4"/><rect x="5" y="7" width="1" height="1" fill="#ffff00"/><rect x="6" y="7" width="1" height="1" fill="#d4d4e4"/><rect x="7" y="7" width="1" height="1" fill="#ffff00"/><rect x="8" y="7" width="1" height="1" fill="#d4d4e4"/><rect x="9" y="7" width="1" height="1" fill="#ffff00"/><rect x="10" y="7" width="1" height="1" fill="#d4d4e4"/><rect x="11" y="7" width="1" height="1" fill="#ffff00"/><rect x="12" y="7" width="1" height="1" fill="#d4d4e4"/><rect x="13" y="7" width="1" height="1" fill="#808080"/><rect x="14" y="7" width="1" height="1" fill="#000000"/><rect x="0" y="8" width="1" height="1" fill="#808080"/><rect x="1" y="8" width="1" height="1" fill="#ffffff"/><rect x="2" y="8" width="1" height="1" fill="#ffff00"/><rect x="3" y="8" width="1" height="1" fill="#d4d4e4"/><rect x="4" y="8" width="1" height="1" fill="#ffff00"/><rect x="5" y="8" width="1" height="1" fill="#d4d4e4"/><rect x="6" y="8" width="1" height="1" fill="#ffff00"/><rect x="7" y="8" width="1" height="1" fill="#d4d4e4"/><rect x="8" y="8" width="1" height="1" fill="#ffff00"/><rect x="9" y="8" width="1" height="1" fill="#d4d4e4"/><rect x="10" y="8" width="1" height="1" fill="#ffff00"/><rect x="11" y="8" width="1" height="1" fill="#d4d4e4"/><rect x="12" y="8" width="1" height="1" fill="#ffff00"/><rect x="13" y="8" width="1" height="1" fill="#808080"/><rect x="14" y="8" width="1" height="1" fill="#000000"/><rect x="0" y="9" width="1" height="1" fill="#808080"/><rect x="1" y="9" width="1" height="1" fill="#ffffff"/><rect x="2" y="9" width="1" height="1" fill="#d4d4e4"/><rect x="3" y="9" width="1" height="1" fill="#ffff00"/><rect x="4" y="9" width="1" height="1" fill="#d4d4e4"/><rect x="5" y="9" width="1" height="1" fill="#ffff00"/><rect x="6" y="9" width="1" height="1" fill="#d4d4e4"/><rect x="7" y="9" width="1" height="1" fill="#ffff00"/><rect x="8" y="9" width="1" height="1" fill="#d4d4e4"/><rect x="9" y="9" width="1" height="1" fill="#ffff00"/><rect x="10" y="9" width="1" height="1" fill="#d4d4e4"/><rect x="11" y="9" width="1" height="1" fill="#ffff00"/><rect x="12" y="9" width="1" height="1" fill="#d4d4e4"/><rect x="13" y="9" width="1" height="1" fill="#808080"/><rect x="14" y="9" width="1" height="1" fill="#000000"/><rect x="0" y="10" width="1" height="1" fill="#808080"/><rect x="1" y="10" width="1" height="1" fill="#ffffff"/><rect x="2" y="10" width="1" height="1" fill="#ffff00"/><rect x="3" y="10" width="1" height="1" fill="#d4d4e4"/><rect x="4" y="10" width="1" height="1" fill="#ffff00"/><rect x="5" y="10" width="1" height="1" fill="#d4d4e4"/><rect x="6" y="10" width="1" height="1" fill="#ffff00"/><rect x="7" y="10" width="1" height="1" fill="#d4d4e4"/><rect x="8" y="10" width="1" height="1" fill="#ffff00"/><rect x="9" y="10" width="1" height="1" fill="#d4d4e4"/><rect x="10" y="10" width="1" height="1" fill="#ffff00"/><rect x="11" y="10" width="1" height="1" fill="#d4d4e4"/><rect x="12" y="10" width="1" height="1" fill="#ffff00"/><rect x="13" y="10" width="1" height="1" fill="#808080"/><rect x="14" y="10" width="1" height="1" fill="#000000"/><rect x="0" y="11" width="14" height="1" fill="#808080"/><rect x="14" y="11" width="1" height="1" fill="#000000"/><rect x="1" y="12" width="14" height="1" fill="#000000"/></svg>
<div class="t" style="left:78.6px;top:126px;transform:scaleX(0.9158)">Setup</div>
<div class="r" style="left:49px;top:148px;width:9px;height:1px;background:repeating-linear-gradient(90deg,#808080 0 1px,transparent 1px 2px)"></div>
<svg class="abs" style="left:59px;top:142px" width="15" height="13" viewBox="0 0 15 13" shape-rendering="crispEdges" ><rect x="2" y="0" width="5" height="1" fill="#808080"/><rect x="1" y="1" width="1" height="1" fill="#808080"/><rect x="2" y="1" width="1" height="1" fill="#ffff00"/><rect x="3" y="1" width="1" height="1" fill="#d4d4e4"/><rect x="4" y="1" width="1" height="1" fill="#ffff00"/><rect x="5" y="1" width="1" height="1" fill="#d4d4e4"/><rect x="6" y="1" width="1" height="1" fill="#ffff00"/><rect x="7" y="1" width="1" height="1" fill="#808080"/><rect x="0" y="2" width="1" height="1" fill="#808080"/><rect x="1" y="2" width="1" height="1" fill="#ffff00"/><rect x="2" y="2" width="1" height="1" fill="#d4d4e4"/><rect x="3" y="2" width="1" height="1" fill="#ffff00"/><rect x="4" y="2" width="1" height="1" fill="#d4d4e4"/><rect x="5" y="2" width="1" height="1" fill="#ffff00"/><rect x="6" y="2" width="1" height="1" fill="#d4d4e4"/><rect x="7" y="2" width="1" height="1" fill="#ffff00"/><rect x="8" y="2" width="5" height="1" fill="#808080"/><rect x="0" y="3" width="1" height="1" fill="#808080"/><rect x="1" y="3" width="12" height="1" fill="#ffffff"/><rect x="13" y="3" width="1" height="1" fill="#808080"/><rect x="0" y="4" width="1" height="1" fill="#808080"/><rect x="1" y="4" width="1" height="1" fill="#ffffff"/><rect x="2" y="4" width="1" height="1" fill="#ffff00"/><rect x="3" y="4" width="1" height="1" fill="#d4d4e4"/><rect x="4" y="4" width="1" height="1" fill="#ffff00"/><rect x="5" y="4" width="1" height="1" fill="#d4d4e4"/><rect x="6" y="4" width="1" height="1" fill="#ffff00"/><rect x="7" y="4" width="1" height="1" fill="#d4d4e4"/><rect x="8" y="4" width="1" height="1" fill="#ffff00"/><rect x="9" y="4" width="1" height="1" fill="#d4d4e4"/><rect x="10" y="4" width="1" height="1" fill="#ffff00"/><rect x="11" y="4" width="1" height="1" fill="#d4d4e4"/><rect x="12" y="4" width="1" height="1" fill="#ffff00"/><rect x="13" y="4" width="1" height="1" fill="#808080"/><rect x="14" y="4" width="1" height="1" fill="#000000"/><rect x="0" y="5" width="1" height="1" fill="#808080"/><rect x="1" y="5" width="1" height="1" fill="#ffffff"/><rect x="2" y="5" width="1" height="1" fill="#d4d4e4"/><rect x="3" y="5" width="1" height="1" fill="#ffff00"/><rect x="4" y="5" width="1" height="1" fill="#d4d4e4"/><rect x="5" y="5" width="1" height="1" fill="#ffff00"/><rect x="6" y="5" width="1" height="1" fill="#d4d4e4"/><rect x="7" y="5" width="1" height="1" fill="#ffff00"/><rect x="8" y="5" width="1" height="1" fill="#d4d4e4"/><rect x="9" y="5" width="1" height="1" fill="#ffff00"/><rect x="10" y="5" width="1" height="1" fill="#d4d4e4"/><rect x="11" y="5" width="1" height="1" fill="#ffff00"/><rect x="12" y="5" width="1" height="1" fill="#d4d4e4"/><rect x="13" y="5" width="1" height="1" fill="#808080"/><rect x="14" y="5" width="1" height="1" fill="#000000"/><rect x="0" y="6" width="1" height="1" fill="#808080"/><rect x="1" y="6" width="1" height="1" fill="#ffffff"/><rect x="2" y="6" width="1" height="1" fill="#ffff00"/><rect x="3" y="6" width="1" height="1" fill="#d4d4e4"/><rect x="4" y="6" width="1" height="1" fill="#ffff00"/><rect x="5" y="6" width="1" height="1" fill="#d4d4e4"/><rect x="6" y="6" width="1" height="1" fill="#ffff00"/><rect x="7" y="6" width="1" height="1" fill="#d4d4e4"/><rect x="8" y="6" width="1" height="1" fill="#ffff00"/><rect x="9" y="6" width="1" height="1" fill="#d4d4e4"/><rect x="10" y="6" width="1" height="1" fill="#ffff00"/><rect x="11" y="6" width="1" height="1" fill="#d4d4e4"/><rect x="12" y="6" width="1" height="1" fill="#ffff00"/><rect x="13" y="6" width="1" height="1" fill="#808080"/><rect x="14" y="6" width="1" height="1" fill="#000000"/><rect x="0" y="7" width="1" height="1" fill="#808080"/><rect x="1" y="7" width="1" height="1" fill="#ffffff"/><rect x="2" y="7" width="1" height="1" fill="#d4d4e4"/><rect x="3" y="7" width="1" height="1" fill="#ffff00"/><rect x="4" y="7" width="1" height="1" fill="#d4d4e4"/><rect x="5" y="7" width="1" height="1" fill="#ffff00"/><rect x="6" y="7" width="1" height="1" fill="#d4d4e4"/><rect x="7" y="7" width="1" height="1" fill="#ffff00"/><rect x="8" y="7" width="1" height="1" fill="#d4d4e4"/><rect x="9" y="7" width="1" height="1" fill="#ffff00"/><rect x="10" y="7" width="1" height="1" fill="#d4d4e4"/><rect x="11" y="7" width="1" height="1" fill="#ffff00"/><rect x="12" y="7" width="1" height="1" fill="#d4d4e4"/><rect x="13" y="7" width="1" height="1" fill="#808080"/><rect x="14" y="7" width="1" height="1" fill="#000000"/><rect x="0" y="8" width="1" height="1" fill="#808080"/><rect x="1" y="8" width="1" height="1" fill="#ffffff"/><rect x="2" y="8" width="1" height="1" fill="#ffff00"/><rect x="3" y="8" width="1" height="1" fill="#d4d4e4"/><rect x="4" y="8" width="1" height="1" fill="#ffff00"/><rect x="5" y="8" width="1" height="1" fill="#d4d4e4"/><rect x="6" y="8" width="1" height="1" fill="#ffff00"/><rect x="7" y="8" width="1" height="1" fill="#d4d4e4"/><rect x="8" y="8" width="1" height="1" fill="#ffff00"/><rect x="9" y="8" width="1" height="1" fill="#d4d4e4"/><rect x="10" y="8" width="1" height="1" fill="#ffff00"/><rect x="11" y="8" width="1" height="1" fill="#d4d4e4"/><rect x="12" y="8" width="1" height="1" fill="#ffff00"/><rect x="13" y="8" width="1" height="1" fill="#808080"/><rect x="14" y="8" width="1" height="1" fill="#000000"/><rect x="0" y="9" width="1" height="1" fill="#808080"/><rect x="1" y="9" width="1" height="1" fill="#ffffff"/><rect x="2" y="9" width="1" height="1" fill="#d4d4e4"/><rect x="3" y="9" width="1" height="1" fill="#ffff00"/><rect x="4" y="9" width="1" height="1" fill="#d4d4e4"/><rect x="5" y="9" width="1" height="1" fill="#ffff00"/><rect x="6" y="9" width="1" height="1" fill="#d4d4e4"/><rect x="7" y="9" width="1" height="1" fill="#ffff00"/><rect x="8" y="9" width="1" height="1" fill="#d4d4e4"/><rect x="9" y="9" width="1" height="1" fill="#ffff00"/><rect x="10" y="9" width="1" height="1" fill="#d4d4e4"/><rect x="11" y="9" width="1" height="1" fill="#ffff00"/><rect x="12" y="9" width="1" height="1" fill="#d4d4e4"/><rect x="13" y="9" width="1" height="1" fill="#808080"/><rect x="14" y="9" width="1" height="1" fill="#000000"/><rect x="0" y="10" width="1" height="1" fill="#808080"/><rect x="1" y="10" width="1" height="1" fill="#ffffff"/><rect x="2" y="10" width="1" height="1" fill="#ffff00"/><rect x="3" y="10" width="1" height="1" fill="#d4d4e4"/><rect x="4" y="10" width="1" height="1" fill="#ffff00"/><rect x="5" y="10" width="1" height="1" fill="#d4d4e4"/><rect x="6" y="10" width="1" height="1" fill="#ffff00"/><rect x="7" y="10" width="1" height="1" fill="#d4d4e4"/><rect x="8" y="10" width="1" height="1" fill="#ffff00"/><rect x="9" y="10" width="1" height="1" fill="#d4d4e4"/><rect x="10" y="10" width="1" height="1" fill="#ffff00"/><rect x="11" y="10" width="1" height="1" fill="#d4d4e4"/><rect x="12" y="10" width="1" height="1" fill="#ffff00"/><rect x="13" y="10" width="1" height="1" fill="#808080"/><rect x="14" y="10" width="1" height="1" fill="#000000"/><rect x="0" y="11" width="14" height="1" fill="#808080"/><rect x="14" y="11" width="1" height="1" fill="#000000"/><rect x="1" y="12" width="14" height="1" fill="#000000"/></svg>
<div class="t" style="left:78.6px;top:142px;transform:scaleX(0.9243)">!!!! PCI Resource ERROR !!!!</div>
<div class="r" style="left:43px;top:160px;width:9px;height:9px;border:1px solid #848484;background:#fff"></div><div class="r" style="left:45px;top:164px;width:5px;height:1px;background:#000;"></div><div class="r" style="left:47px;top:162px;width:1px;height:5px;background:#000;"></div>
<div class="r" style="left:53px;top:164px;width:5px;height:1px;background:repeating-linear-gradient(90deg,#808080 0 1px,transparent 1px 2px)"></div>
<svg class="abs" style="left:59px;top:158px" width="15" height="13" viewBox="0 0 15 13" shape-rendering="crispEdges" ><rect x="2" y="0" width="5" height="1" fill="#808080"/><rect x="1" y="1" width="1" height="1" fill="#808080"/><rect x="2" y="1" width="1" height="1" fill="#ffff00"/><rect x="3" y="1" width="1" height="1" fill="#d4d4e4"/><rect x="4" y="1" width="1" height="1" fill="#ffff00"/><rect x="5" y="1" width="1" height="1" fill="#d4d4e4"/><rect x="6" y="1" width="1" height="1" fill="#ffff00"/><rect x="7" y="1" width="1" height="1" fill="#808080"/><rect x="0" y="2" width="1" height="1" fill="#808080"/><rect x="1" y="2" width="1" height="1" fill="#ffff00"/><rect x="2" y="2" width="1" height="1" fill="#d4d4e4"/><rect x="3" y="2" width="1" height="1" fill="#ffff00"/><rect x="4" y="2" width="1" height="1" fill="#d4d4e4"/><rect x="5" y="2" width="1" height="1" fill="#ffff00"/><rect x="6" y="2" width="1" height="1" fill="#d4d4e4"/><rect x="7" y="2" width="1" height="1" fill="#ffff00"/><rect x="8" y="2" width="5" height="1" fill="#808080"/><rect x="0" y="3" width="1" height="1" fill="#808080"/><rect x="1" y="3" width="12" height="1" fill="#ffffff"/><rect x="13" y="3" width="1" height="1" fill="#808080"/><rect x="0" y="4" width="1" height="1" fill="#808080"/><rect x="1" y="4" width="1" height="1" fill="#ffffff"/><rect x="2" y="4" width="1" height="1" fill="#ffff00"/><rect x="3" y="4" width="1" height="1" fill="#d4d4e4"/><rect x="4" y="4" width="1" height="1" fill="#ffff00"/><rect x="5" y="4" width="1" height="1" fill="#d4d4e4"/><rect x="6" y="4" width="1" height="1" fill="#ffff00"/><rect x="7" y="4" width="1" height="1" fill="#d4d4e4"/><rect x="8" y="4" width="1" height="1" fill="#ffff00"/><rect x="9" y="4" width="1" height="1" fill="#d4d4e4"/><rect x="10" y="4" width="1" height="1" fill="#ffff00"/><rect x="11" y="4" width="1" height="1" fill="#d4d4e4"/><rect x="12" y="4" width="1" height="1" fill="#ffff00"/><rect x="13" y="4" width="1" height="1" fill="#808080"/><rect x="14" y="4" width="1" height="1" fill="#000000"/><rect x="0" y="5" width="1" height="1" fill="#808080"/><rect x="1" y="5" width="1" height="1" fill="#ffffff"/><rect x="2" y="5" width="1" height="1" fill="#d4d4e4"/><rect x="3" y="5" width="1" height="1" fill="#ffff00"/><rect x="4" y="5" width="1" height="1" fill="#d4d4e4"/><rect x="5" y="5" width="1" height="1" fill="#ffff00"/><rect x="6" y="5" width="1" height="1" fill="#d4d4e4"/><rect x="7" y="5" width="1" height="1" fill="#ffff00"/><rect x="8" y="5" width="1" height="1" fill="#d4d4e4"/><rect x="9" y="5" width="1" height="1" fill="#ffff00"/><rect x="10" y="5" width="1" height="1" fill="#d4d4e4"/><rect x="11" y="5" width="1" height="1" fill="#ffff00"/><rect x="12" y="5" width="1" height="1" fill="#d4d4e4"/><rect x="13" y="5" width="1" height="1" fill="#808080"/><rect x="14" y="5" width="1" height="1" fill="#000000"/><rect x="0" y="6" width="1" height="1" fill="#808080"/><rect x="1" y="6" width="1" height="1" fill="#ffffff"/><rect x="2" y="6" width="1" height="1" fill="#ffff00"/><rect x="3" y="6" width="1" height="1" fill="#d4d4e4"/><rect x="4" y="6" width="1" height="1" fill="#ffff00"/><rect x="5" y="6" width="1" height="1" fill="#d4d4e4"/><rect x="6" y="6" width="1" height="1" fill="#ffff00"/><rect x="7" y="6" width="1" height="1" fill="#d4d4e4"/><rect x="8" y="6" width="1" height="1" fill="#ffff00"/><rect x="9" y="6" width="1" height="1" fill="#d4d4e4"/><rect x="10" y="6" width="1" height="1" fill="#ffff00"/><rect x="11" y="6" width="1" height="1" fill="#d4d4e4"/><rect x="12" y="6" width="1" height="1" fill="#ffff00"/><rect x="13" y="6" width="1" height="1" fill="#808080"/><rect x="14" y="6" width="1" height="1" fill="#000000"/><rect x="0" y="7" width="1" height="1" fill="#808080"/><rect x="1" y="7" width="1" height="1" fill="#ffffff"/><rect x="2" y="7" width="1" height="1" fill="#d4d4e4"/><rect x="3" y="7" width="1" height="1" fill="#ffff00"/><rect x="4" y="7" width="1" height="1" fill="#d4d4e4"/><rect x="5" y="7" width="1" height="1" fill="#ffff00"/><rect x="6" y="7" width="1" height="1" fill="#d4d4e4"/><rect x="7" y="7" width="1" height="1" fill="#ffff00"/><rect x="8" y="7" width="1" height="1" fill="#d4d4e4"/><rect x="9" y="7" width="1" height="1" fill="#ffff00"/><rect x="10" y="7" width="1" height="1" fill="#d4d4e4"/><rect x="11" y="7" width="1" height="1" fill="#ffff00"/><rect x="12" y="7" width="1" height="1" fill="#d4d4e4"/><rect x="13" y="7" width="1" height="1" fill="#808080"/><rect x="14" y="7" width="1" height="1" fill="#000000"/><rect x="0" y="8" width="1" height="1" fill="#808080"/><rect x="1" y="8" width="1" height="1" fill="#ffffff"/><rect x="2" y="8" width="1" height="1" fill="#ffff00"/><rect x="3" y="8" width="1" height="1" fill="#d4d4e4"/><rect x="4" y="8" width="1" height="1" fill="#ffff00"/><rect x="5" y="8" width="1" height="1" fill="#d4d4e4"/><rect x="6" y="8" width="1" height="1" fill="#ffff00"/><rect x="7" y="8" width="1" height="1" fill="#d4d4e4"/><rect x="8" y="8" width="1" height="1" fill="#ffff00"/><rect x="9" y="8" width="1" height="1" fill="#d4d4e4"/><rect x="10" y="8" width="1" height="1" fill="#ffff00"/><rect x="11" y="8" width="1" height="1" fill="#d4d4e4"/><rect x="12" y="8" width="1" height="1" fill="#ffff00"/><rect x="13" y="8" width="1" height="1" fill="#808080"/><rect x="14" y="8" width="1" height="1" fill="#000000"/><rect x="0" y="9" width="1" height="1" fill="#808080"/><rect x="1" y="9" width="1" height="1" fill="#ffffff"/><rect x="2" y="9" width="1" height="1" fill="#d4d4e4"/><rect x="3" y="9" width="1" height="1" fill="#ffff00"/><rect x="4" y="9" width="1" height="1" fill="#d4d4e4"/><rect x="5" y="9" width="1" height="1" fill="#ffff00"/><rect x="6" y="9" width="1" height="1" fill="#d4d4e4"/><rect x="7" y="9" width="1" height="1" fill="#ffff00"/><rect x="8" y="9" width="1" height="1" fill="#d4d4e4"/><rect x="9" y="9" width="1" height="1" fill="#ffff00"/><rect x="10" y="9" width="1" height="1" fill="#d4d4e4"/><rect x="11" y="9" width="1" height="1" fill="#ffff00"/><rect x="12" y="9" width="1" height="1" fill="#d4d4e4"/><rect x="13" y="9" width="1" height="1" fill="#808080"/><rect x="14" y="9" width="1" height="1" fill="#000000"/><rect x="0" y="10" width="1" height="1" fill="#808080"/><rect x="1" y="10" width="1" height="1" fill="#ffffff"/><rect x="2" y="10" width="1" height="1" fill="#ffff00"/><rect x="3" y="10" width="1" height="1" fill="#d4d4e4"/><rect x="4" y="10" width="1" height="1" fill="#ffff00"/><rect x="5" y="10" width="1" height="1" fill="#d4d4e4"/><rect x="6" y="10" width="1" height="1" fill="#ffff00"/><rect x="7" y="10" width="1" height="1" fill="#d4d4e4"/><rect x="8" y="10" width="1" height="1" fill="#ffff00"/><rect x="9" y="10" width="1" height="1" fill="#d4d4e4"/><rect x="10" y="10" width="1" height="1" fill="#ffff00"/><rect x="11" y="10" width="1" height="1" fill="#d4d4e4"/><rect x="12" y="10" width="1" height="1" fill="#ffff00"/><rect x="13" y="10" width="1" height="1" fill="#808080"/><rect x="14" y="10" width="1" height="1" fill="#000000"/><rect x="0" y="11" width="14" height="1" fill="#808080"/><rect x="14" y="11" width="1" height="1" fill="#000000"/><rect x="1" y="12" width="14" height="1" fill="#000000"/></svg>
<div class="t" style="left:78.6px;top:158px;transform:scaleX(0.9129)">Recovery</div>
<div class="r" style="left:49px;top:180px;width:9px;height:1px;background:repeating-linear-gradient(90deg,#808080 0 1px,transparent 1px 2px)"></div>
<svg class="abs" style="left:59px;top:174px" width="15" height="13" viewBox="0 0 15 13" shape-rendering="crispEdges" ><rect x="2" y="0" width="5" height="1" fill="#808080"/><rect x="1" y="1" width="1" height="1" fill="#808080"/><rect x="2" y="1" width="1" height="1" fill="#ffff00"/><rect x="3" y="1" width="1" height="1" fill="#d4d4e4"/><rect x="4" y="1" width="1" height="1" fill="#ffff00"/><rect x="5" y="1" width="1" height="1" fill="#d4d4e4"/><rect x="6" y="1" width="1" height="1" fill="#ffff00"/><rect x="7" y="1" width="1" height="1" fill="#808080"/><rect x="0" y="2" width="1" height="1" fill="#808080"/><rect x="1" y="2" width="1" height="1" fill="#ffff00"/><rect x="2" y="2" width="1" height="1" fill="#d4d4e4"/><rect x="3" y="2" width="1" height="1" fill="#ffff00"/><rect x="4" y="2" width="1" height="1" fill="#d4d4e4"/><rect x="5" y="2" width="1" height="1" fill="#ffff00"/><rect x="6" y="2" width="1" height="1" fill="#d4d4e4"/><rect x="7" y="2" width="1" height="1" fill="#ffff00"/><rect x="8" y="2" width="5" height="1" fill="#808080"/><rect x="0" y="3" width="1" height="1" fill="#808080"/><rect x="1" y="3" width="12" height="1" fill="#ffffff"/><rect x="13" y="3" width="1" height="1" fill="#808080"/><rect x="0" y="4" width="1" height="1" fill="#808080"/><rect x="1" y="4" width="1" height="1" fill="#ffffff"/><rect x="2" y="4" width="1" height="1" fill="#ffff00"/><rect x="3" y="4" width="1" height="1" fill="#d4d4e4"/><rect x="4" y="4" width="1" height="1" fill="#ffff00"/><rect x="5" y="4" width="1" height="1" fill="#d4d4e4"/><rect x="6" y="4" width="1" height="1" fill="#ffff00"/><rect x="7" y="4" width="1" height="1" fill="#d4d4e4"/><rect x="8" y="4" width="1" height="1" fill="#ffff00"/><rect x="9" y="4" width="1" height="1" fill="#d4d4e4"/><rect x="10" y="4" width="1" height="1" fill="#ffff00"/><rect x="11" y="4" width="1" height="1" fill="#d4d4e4"/><rect x="12" y="4" width="1" height="1" fill="#ffff00"/><rect x="13" y="4" width="1" height="1" fill="#808080"/><rect x="14" y="4" width="1" height="1" fill="#000000"/><rect x="0" y="5" width="1" height="1" fill="#808080"/><rect x="1" y="5" width="1" height="1" fill="#ffffff"/><rect x="2" y="5" width="1" height="1" fill="#d4d4e4"/><rect x="3" y="5" width="1" height="1" fill="#ffff00"/><rect x="4" y="5" width="1" height="1" fill="#d4d4e4"/><rect x="5" y="5" width="1" height="1" fill="#ffff00"/><rect x="6" y="5" width="1" height="1" fill="#d4d4e4"/><rect x="7" y="5" width="1" height="1" fill="#ffff00"/><rect x="8" y="5" width="1" height="1" fill="#d4d4e4"/><rect x="9" y="5" width="1" height="1" fill="#ffff00"/><rect x="10" y="5" width="1" height="1" fill="#d4d4e4"/><rect x="11" y="5" width="1" height="1" fill="#ffff00"/><rect x="12" y="5" width="1" height="1" fill="#d4d4e4"/><rect x="13" y="5" width="1" height="1" fill="#808080"/><rect x="14" y="5" width="1" height="1" fill="#000000"/><rect x="0" y="6" width="1" height="1" fill="#808080"/><rect x="1" y="6" width="1" height="1" fill="#ffffff"/><rect x="2" y="6" width="1" height="1" fill="#ffff00"/><rect x="3" y="6" width="1" height="1" fill="#d4d4e4"/><rect x="4" y="6" width="1" height="1" fill="#ffff00"/><rect x="5" y="6" width="1" height="1" fill="#d4d4e4"/><rect x="6" y="6" width="1" height="1" fill="#ffff00"/><rect x="7" y="6" width="1" height="1" fill="#d4d4e4"/><rect x="8" y="6" width="1" height="1" fill="#ffff00"/><rect x="9" y="6" width="1" height="1" fill="#d4d4e4"/><rect x="10" y="6" width="1" height="1" fill="#ffff00"/><rect x="11" y="6" width="1" height="1" fill="#d4d4e4"/><rect x="12" y="6" width="1" height="1" fill="#ffff00"/><rect x="13" y="6" width="1" height="1" fill="#808080"/><rect x="14" y="6" width="1" height="1" fill="#000000"/><rect x="0" y="7" width="1" height="1" fill="#808080"/><rect x="1" y="7" width="1" height="1" fill="#ffffff"/><rect x="2" y="7" width="1" height="1" fill="#d4d4e4"/><rect x="3" y="7" width="1" height="1" fill="#ffff00"/><rect x="4" y="7" width="1" height="1" fill="#d4d4e4"/><rect x="5" y="7" width="1" height="1" fill="#ffff00"/><rect x="6" y="7" width="1" height="1" fill="#d4d4e4"/><rect x="7" y="7" width="1" height="1" fill="#ffff00"/><rect x="8" y="7" width="1" height="1" fill="#d4d4e4"/><rect x="9" y="7" width="1" height="1" fill="#ffff00"/><rect x="10" y="7" width="1" height="1" fill="#d4d4e4"/><rect x="11" y="7" width="1" height="1" fill="#ffff00"/><rect x="12" y="7" width="1" height="1" fill="#d4d4e4"/><rect x="13" y="7" width="1" height="1" fill="#808080"/><rect x="14" y="7" width="1" height="1" fill="#000000"/><rect x="0" y="8" width="1" height="1" fill="#808080"/><rect x="1" y="8" width="1" height="1" fill="#ffffff"/><rect x="2" y="8" width="1" height="1" fill="#ffff00"/><rect x="3" y="8" width="1" height="1" fill="#d4d4e4"/><rect x="4" y="8" width="1" height="1" fill="#ffff00"/><rect x="5" y="8" width="1" height="1" fill="#d4d4e4"/><rect x="6" y="8" width="1" height="1" fill="#ffff00"/><rect x="7" y="8" width="1" height="1" fill="#d4d4e4"/><rect x="8" y="8" width="1" height="1" fill="#ffff00"/><rect x="9" y="8" width="1" height="1" fill="#d4d4e4"/><rect x="10" y="8" width="1" height="1" fill="#ffff00"/><rect x="11" y="8" width="1" height="1" fill="#d4d4e4"/><rect x="12" y="8" width="1" height="1" fill="#ffff00"/><rect x="13" y="8" width="1" height="1" fill="#808080"/><rect x="14" y="8" width="1" height="1" fill="#000000"/><rect x="0" y="9" width="1" height="1" fill="#808080"/><rect x="1" y="9" width="1" height="1" fill="#ffffff"/><rect x="2" y="9" width="1" height="1" fill="#d4d4e4"/><rect x="3" y="9" width="1" height="1" fill="#ffff00"/><rect x="4" y="9" width="1" height="1" fill="#d4d4e4"/><rect x="5" y="9" width="1" height="1" fill="#ffff00"/><rect x="6" y="9" width="1" height="1" fill="#d4d4e4"/><rect x="7" y="9" width="1" height="1" fill="#ffff00"/><rect x="8" y="9" width="1" height="1" fill="#d4d4e4"/><rect x="9" y="9" width="1" height="1" fill="#ffff00"/><rect x="10" y="9" width="1" height="1" fill="#d4d4e4"/><rect x="11" y="9" width="1" height="1" fill="#ffff00"/><rect x="12" y="9" width="1" height="1" fill="#d4d4e4"/><rect x="13" y="9" width="1" height="1" fill="#808080"/><rect x="14" y="9" width="1" height="1" fill="#000000"/><rect x="0" y="10" width="1" height="1" fill="#808080"/><rect x="1" y="10" width="1" height="1" fill="#ffffff"/><rect x="2" y="10" width="1" height="1" fill="#ffff00"/><rect x="3" y="10" width="1" height="1" fill="#d4d4e4"/><rect x="4" y="10" width="1" height="1" fill="#ffff00"/><rect x="5" y="10" width="1" height="1" fill="#d4d4e4"/><rect x="6" y="10" width="1" height="1" fill="#ffff00"/><rect x="7" y="10" width="1" height="1" fill="#d4d4e4"/><rect x="8" y="10" width="1" height="1" fill="#ffff00"/><rect x="9" y="10" width="1" height="1" fill="#d4d4e4"/><rect x="10" y="10" width="1" height="1" fill="#ffff00"/><rect x="11" y="10" width="1" height="1" fill="#d4d4e4"/><rect x="12" y="10" width="1" height="1" fill="#ffff00"/><rect x="13" y="10" width="1" height="1" fill="#808080"/><rect x="14" y="10" width="1" height="1" fill="#000000"/><rect x="0" y="11" width="14" height="1" fill="#808080"/><rect x="14" y="11" width="1" height="1" fill="#000000"/><rect x="1" y="12" width="14" height="1" fill="#000000"/></svg>
<div class="r" style="left:43px;top:192px;width:9px;height:9px;border:1px solid #848484;background:#fff"></div><div class="r" style="left:45px;top:196px;width:5px;height:1px;background:#000;"></div><div class="r" style="left:47px;top:194px;width:1px;height:5px;background:#000;"></div>
<div class="r" style="left:53px;top:196px;width:5px;height:1px;background:repeating-linear-gradient(90deg,#808080 0 1px,transparent 1px 2px)"></div>
<svg class="abs" style="left:59px;top:190px" width="15" height="13" viewBox="0 0 15 13" shape-rendering="crispEdges" ><rect x="2" y="0" width="5" height="1" fill="#808080"/><rect x="1" y="1" width="1" height="1" fill="#808080"/><rect x="2" y="1" width="1" height="1" fill="#ffff00"/><rect x="3" y="1" width="1" height="1" fill="#d4d4e4"/><rect x="4" y="1" width="1" height="1" fill="#ffff00"/><rect x="5" y="1" width="1" height="1" fill="#d4d4e4"/><rect x="6" y="1" width="1" height="1" fill="#ffff00"/><rect x="7" y="1" width="1" height="1" fill="#808080"/><rect x="0" y="2" width="1" height="1" fill="#808080"/><rect x="1" y="2" width="1" height="1" fill="#ffff00"/><rect x="2" y="2" width="1" height="1" fill="#d4d4e4"/><rect x="3" y="2" width="1" height="1" fill="#ffff00"/><rect x="4" y="2" width="1" height="1" fill="#d4d4e4"/><rect x="5" y="2" width="1" height="1" fill="#ffff00"/><rect x="6" y="2" width="1" height="1" fill="#d4d4e4"/><rect x="7" y="2" width="1" height="1" fill="#ffff00"/><rect x="8" y="2" width="5" height="1" fill="#808080"/><rect x="0" y="3" width="1" height="1" fill="#808080"/><rect x="1" y="3" width="12" height="1" fill="#ffffff"/><rect x="13" y="3" width="1" height="1" fill="#808080"/><rect x="0" y="4" width="1" height="1" fill="#808080"/><rect x="1" y="4" width="1" height="1" fill="#ffffff"/><rect x="2" y="4" width="1" height="1" fill="#ffff00"/><rect x="3" y="4" width="1" height="1" fill="#d4d4e4"/><rect x="4" y="4" width="1" height="1" fill="#ffff00"/><rect x="5" y="4" width="1" height="1" fill="#d4d4e4"/><rect x="6" y="4" width="1" height="1" fill="#ffff00"/><rect x="7" y="4" width="1" height="1" fill="#d4d4e4"/><rect x="8" y="4" width="1" height="1" fill="#ffff00"/><rect x="9" y="4" width="1" height="1" fill="#d4d4e4"/><rect x="10" y="4" width="1" height="1" fill="#ffff00"/><rect x="11" y="4" width="1" height="1" fill="#d4d4e4"/><rect x="12" y="4" width="1" height="1" fill="#ffff00"/><rect x="13" y="4" width="1" height="1" fill="#808080"/><rect x="14" y="4" width="1" height="1" fill="#000000"/><rect x="0" y="5" width="1" height="1" fill="#808080"/><rect x="1" y="5" width="1" height="1" fill="#ffffff"/><rect x="2" y="5" width="1" height="1" fill="#d4d4e4"/><rect x="3" y="5" width="1" height="1" fill="#ffff00"/><rect x="4" y="5" width="1" height="1" fill="#d4d4e4"/><rect x="5" y="5" width="1" height="1" fill="#ffff00"/><rect x="6" y="5" width="1" height="1" fill="#d4d4e4"/><rect x="7" y="5" width="1" height="1" fill="#ffff00"/><rect x="8" y="5" width="1" height="1" fill="#d4d4e4"/><rect x="9" y="5" width="1" height="1" fill="#ffff00"/><rect x="10" y="5" width="1" height="1" fill="#d4d4e4"/><rect x="11" y="5" width="1" height="1" fill="#ffff00"/><rect x="12" y="5" width="1" height="1" fill="#d4d4e4"/><rect x="13" y="5" width="1" height="1" fill="#808080"/><rect x="14" y="5" width="1" height="1" fill="#000000"/><rect x="0" y="6" width="1" height="1" fill="#808080"/><rect x="1" y="6" width="1" height="1" fill="#ffffff"/><rect x="2" y="6" width="1" height="1" fill="#ffff00"/><rect x="3" y="6" width="1" height="1" fill="#d4d4e4"/><rect x="4" y="6" width="1" height="1" fill="#ffff00"/><rect x="5" y="6" width="1" height="1" fill="#d4d4e4"/><rect x="6" y="6" width="1" height="1" fill="#ffff00"/><rect x="7" y="6" width="1" height="1" fill="#d4d4e4"/><rect x="8" y="6" width="1" height="1" fill="#ffff00"/><rect x="9" y="6" width="1" height="1" fill="#d4d4e4"/><rect x="10" y="6" width="1" height="1" fill="#ffff00"/><rect x="11" y="6" width="1" height="1" fill="#d4d4e4"/><rect x="12" y="6" width="1" height="1" fill="#ffff00"/><rect x="13" y="6" width="1" height="1" fill="#808080"/><rect x="14" y="6" width="1" height="1" fill="#000000"/><rect x="0" y="7" width="1" height="1" fill="#808080"/><rect x="1" y="7" width="1" height="1" fill="#ffffff"/><rect x="2" y="7" width="1" height="1" fill="#d4d4e4"/><rect x="3" y="7" width="1" height="1" fill="#ffff00"/><rect x="4" y="7" width="1" height="1" fill="#d4d4e4"/><rect x="5" y="7" width="1" height="1" fill="#ffff00"/><rect x="6" y="7" width="1" height="1" fill="#d4d4e4"/><rect x="7" y="7" width="1" height="1" fill="#ffff00"/><rect x="8" y="7" width="1" height="1" fill="#d4d4e4"/><rect x="9" y="7" width="1" height="1" fill="#ffff00"/><rect x="10" y="7" width="1" height="1" fill="#d4d4e4"/><rect x="11" y="7" width="1" height="1" fill="#ffff00"/><rect x="12" y="7" width="1" height="1" fill="#d4d4e4"/><rect x="13" y="7" width="1" height="1" fill="#808080"/><rect x="14" y="7" width="1" height="1" fill="#000000"/><rect x="0" y="8" width="1" height="1" fill="#808080"/><rect x="1" y="8" width="1" height="1" fill="#ffffff"/><rect x="2" y="8" width="1" height="1" fill="#ffff00"/><rect x="3" y="8" width="1" height="1" fill="#d4d4e4"/><rect x="4" y="8" width="1" height="1" fill="#ffff00"/><rect x="5" y="8" width="1" height="1" fill="#d4d4e4"/><rect x="6" y="8" width="1" height="1" fill="#ffff00"/><rect x="7" y="8" width="1" height="1" fill="#d4d4e4"/><rect x="8" y="8" width="1" height="1" fill="#ffff00"/><rect x="9" y="8" width="1" height="1" fill="#d4d4e4"/><rect x="10" y="8" width="1" height="1" fill="#ffff00"/><rect x="11" y="8" width="1" height="1" fill="#d4d4e4"/><rect x="12" y="8" width="1" height="1" fill="#ffff00"/><rect x="13" y="8" width="1" height="1" fill="#808080"/><rect x="14" y="8" width="1" height="1" fill="#000000"/><rect x="0" y="9" width="1" height="1" fill="#808080"/><rect x="1" y="9" width="1" height="1" fill="#ffffff"/><rect x="2" y="9" width="1" height="1" fill="#d4d4e4"/><rect x="3" y="9" width="1" height="1" fill="#ffff00"/><rect x="4" y="9" width="1" height="1" fill="#d4d4e4"/><rect x="5" y="9" width="1" height="1" fill="#ffff00"/><rect x="6" y="9" width="1" height="1" fill="#d4d4e4"/><rect x="7" y="9" width="1" height="1" fill="#ffff00"/><rect x="8" y="9" width="1" height="1" fill="#d4d4e4"/><rect x="9" y="9" width="1" height="1" fill="#ffff00"/><rect x="10" y="9" width="1" height="1" fill="#d4d4e4"/><rect x="11" y="9" width="1" height="1" fill="#ffff00"/><rect x="12" y="9" width="1" height="1" fill="#d4d4e4"/><rect x="13" y="9" width="1" height="1" fill="#808080"/><rect x="14" y="9" width="1" height="1" fill="#000000"/><rect x="0" y="10" width="1" height="1" fill="#808080"/><rect x="1" y="10" width="1" height="1" fill="#ffffff"/><rect x="2" y="10" width="1" height="1" fill="#ffff00"/><rect x="3" y="10" width="1" height="1" fill="#d4d4e4"/><rect x="4" y="10" width="1" height="1" fill="#ffff00"/><rect x="5" y="10" width="1" height="1" fill="#d4d4e4"/><rect x="6" y="10" width="1" height="1" fill="#ffff00"/><rect x="7" y="10" width="1" height="1" fill="#d4d4e4"/><rect x="8" y="10" width="1" height="1" fill="#ffff00"/><rect x="9" y="10" width="1" height="1" fill="#d4d4e4"/><rect x="10" y="10" width="1" height="1" fill="#ffff00"/><rect x="11" y="10" width="1" height="1" fill="#d4d4e4"/><rect x="12" y="10" width="1" height="1" fill="#ffff00"/><rect x="13" y="10" width="1" height="1" fill="#808080"/><rect x="14" y="10" width="1" height="1" fill="#000000"/><rect x="0" y="11" width="14" height="1" fill="#808080"/><rect x="14" y="11" width="1" height="1" fill="#000000"/><rect x="1" y="12" width="14" height="1" fill="#000000"/></svg>
<div class="t" style="left:78.6px;top:190px;transform:scaleX(0.9106)">IntelRCSetup</div>
<div class="r" style="left:270px;top:110px;width:730px;height:481px;background:#ffffff;"></div>
<div class="r" style="left:268px;top:108px;width:733px;height:1px;background:#a0a0a0;"></div><div class="r" style="left:268px;top:108px;width:1px;height:484px;background:#a0a0a0;"></div><div class="r" style="left:269px;top:109px;width:731px;height:1px;background:#696969;"></div><div class="r" style="left:269px;top:109px;width:1px;height:482px;background:#696969;"></div><div class="r" style="left:268px;top:592px;width:734px;height:1px;background:#ffffff;"></div><div class="r" style="left:1001px;top:108px;width:1px;height:485px;background:#ffffff;"></div><div class="r" style="left:269px;top:591px;width:732px;height:1px;background:#e3e3e3;"></div><div class="r" style="left:1000px;top:109px;width:1px;height:483px;background:#e3e3e3;"></div>
<div class="r" style="left:270px;top:110px;width:730px;height:16px;background:#f0f0f0;"></div>
<div class="r" style="left:270px;top:110px;width:48px;height:1px;background:#ffffff;"></div>
<div class="r" style="left:270px;top:110px;width:1px;height:15px;background:#ffffff;"></div>
<div class="r" style="left:270px;top:125px;width:49px;height:1px;background:#808080;"></div>
<div class="r" style="left:318px;top:110px;width:1px;height:16px;background:#808080;"></div>
<div class="t" style="left:276px;top:113px;transform:scaleX(0.8912)">Handle</div>
<div class="r" style="left:319px;top:110px;width:179px;height:1px;background:#ffffff;"></div>
<div class="r" style="left:319px;top:110px;width:1px;height:15px;background:#ffffff;"></div>
<div class="r" style="left:319px;top:125px;width:180px;height:1px;background:#808080;"></div>
<div class="r" style="left:498px;top:110px;width:1px;height:16px;background:#808080;"></div>
<div class="t" style="left:326px;top:113px;transform:scaleX(0.9007)">Control Group Structures</div>
<div class="r" style="left:499px;top:110px;width:49px;height:1px;background:#ffffff;"></div>
<div class="r" style="left:499px;top:110px;width:1px;height:15px;background:#ffffff;"></div>
<div class="r" style="left:499px;top:125px;width:50px;height:1px;background:#808080;"></div>
<div class="r" style="left:548px;top:110px;width:1px;height:16px;background:#808080;"></div>
<div class="t" style="left:506px;top:113px;transform:scaleX(0.8838)">Show</div>
<div class="r" style="left:549px;top:110px;width:99px;height:1px;background:#ffffff;"></div>
<div class="r" style="left:549px;top:110px;width:1px;height:15px;background:#ffffff;"></div>
<div class="r" style="left:549px;top:125px;width:100px;height:1px;background:#808080;"></div>
<div class="r" style="left:648px;top:110px;width:1px;height:16px;background:#808080;"></div>
<div class="t" style="left:556px;top:113px;transform:scaleX(0.9422)">Access/Use</div>
<div class="r" style="left:649px;top:110px;width:149px;height:1px;background:#ffffff;"></div>
<div class="r" style="left:649px;top:110px;width:1px;height:15px;background:#ffffff;"></div>
<div class="r" style="left:649px;top:125px;width:150px;height:1px;background:#808080;"></div>
<div class="r" style="left:798px;top:110px;width:1px;height:16px;background:#808080;"></div>
<div class="t" style="left:656px;top:113px;transform:scaleX(0.8739)">Failsafe</div>
<div class="r" style="left:799px;top:110px;width:199px;height:1px;background:#ffffff;"></div>
<div class="r" style="left:799px;top:110px;width:1px;height:15px;background:#ffffff;"></div>
<div class="r" style="left:799px;top:125px;width:200px;height:1px;background:#808080;"></div>
<div class="r" style="left:998px;top:110px;width:1px;height:16px;background:#808080;"></div>
<div class="t" style="left:806px;top:113px;transform:scaleX(0.8717)">Optimal</div>
<div class="r" style="left:999px;top:110px;width:1px;height:15px;background:#ffffff;"></div>
<div class="r" style="left:999px;top:125px;width:2px;height:1px;background:#808080;"></div>
<div class="r" style="left:1000px;top:126px;width:1px;height:465px;background:#f0f0f0;"></div>
<div class="r" style="left:270px;top:128px;width:730px;height:1px;background:#f0f0f0;"></div>
<div class="r" style="left:270px;top:142px;width:730px;height:1px;background:#f0f0f0;"></div>
<div class="r" style="left:270px;top:156px;width:730px;height:1px;background:#f0f0f0;"></div>
<div class="r" style="left:270px;top:170px;width:730px;height:1px;background:#f0f0f0;"></div>
<div class="r" style="left:270px;top:184px;width:730px;height:1px;background:#f0f0f0;"></div>
<div class="r" style="left:270px;top:198px;width:730px;height:1px;background:#f0f0f0;"></div>
<div class="r" style="left:270px;top:212px;width:730px;height:1px;background:#f0f0f0;"></div>
<div class="r" style="left:270px;top:226px;width:730px;height:1px;background:#f0f0f0;"></div>
<div class="r" style="left:270px;top:240px;width:730px;height:1px;background:#f0f0f0;"></div>
<div class="r" style="left:270px;top:254px;width:730px;height:1px;background:#f0f0f0;"></div>
<div class="r" style="left:270px;top:268px;width:730px;height:1px;background:#f0f0f0;"></div>
<div class="r" style="left:270px;top:282px;width:730px;height:1px;background:#f0f0f0;"></div>
<div class="r" style="left:270px;top:296px;width:730px;height:1px;background:#f0f0f0;"></div>
<div class="r" style="left:270px;top:310px;width:730px;height:1px;background:#f0f0f0;"></div>
<div class="r" style="left:270px;top:324px;width:730px;height:1px;background:#f0f0f0;"></div>
<div class="r" style="left:270px;top:338px;width:730px;height:1px;background:#f0f0f0;"></div>
<div class="r" style="left:270px;top:352px;width:730px;height:1px;background:#f0f0f0;"></div>
<div class="r" style="left:270px;top:366px;width:730px;height:1px;background:#f0f0f0;"></div>
<div class="r" style="left:270px;top:380px;width:730px;height:1px;background:#f0f0f0;"></div>
<div class="r" style="left:270px;top:394px;width:730px;height:1px;background:#f0f0f0;"></div>
<div class="r" style="left:270px;top:408px;width:730px;height:1px;background:#f0f0f0;"></div>
<div class="r" style="left:270px;top:422px;width:730px;height:1px;background:#f0f0f0;"></div>
<div class="r" style="left:270px;top:436px;width:730px;height:1px;background:#f0f0f0;"></div>
<div class="r" style="left:270px;top:450px;width:730px;height:1px;background:#f0f0f0;"></div>
<div class="r" style="left:270px;top:464px;width:730px;height:1px;background:#f0f0f0;"></div>
<div class="r" style="left:270px;top:478px;width:730px;height:1px;background:#f0f0f0;"></div>
<div class="r" style="left:270px;top:492px;width:730px;height:1px;background:#f0f0f0;"></div>
<div class="r" style="left:270px;top:506px;width:730px;height:1px;background:#f0f0f0;"></div>
<div class="r" style="left:270px;top:520px;width:730px;height:1px;background:#f0f0f0;"></div>
<div class="r" style="left:270px;top:534px;width:730px;height:1px;background:#f0f0f0;"></div>
<div class="r" style="left:270px;top:548px;width:730px;height:1px;background:#f0f0f0;"></div>
<div class="r" style="left:270px;top:562px;width:730px;height:1px;background:#f0f0f0;"></div>
<div class="r" style="left:270px;top:576px;width:730px;height:1px;background:#f0f0f0;"></div>
<div class="r" style="left:270px;top:590px;width:730px;height:1px;background:#f0f0f0;"></div>
<div class="r" style="left:320px;top:126px;width:1px;height:465px;background:#f0f0f0;"></div>
<div class="r" style="left:500px;top:126px;width:1px;height:465px;background:#f0f0f0;"></div>
<div class="r" style="left:550px;top:126px;width:1px;height:465px;background:#f0f0f0;"></div>
<div class="r" style="left:650px;top:126px;width:1px;height:465px;background:#f0f0f0;"></div>
<div class="r" style="left:800px;top:126px;width:1px;height:465px;background:#f0f0f0;"></div>
<div class="r" style="left:1000px;top:126px;width:1px;height:465px;background:#f0f0f0;"></div>
<div class="t" style="left:274px;top:130px;transform:scaleX(0.8902)">(0431)</div>
<div class="t" style="left:326px;top:130px;transform:scaleX(0.8951)">Common RefCode Configuration</div>
<div class="t" style="left:274px;top:144px;transform:scaleX(0.8259)">(FFFF)</div>
<div class="t" style="left:506px;top:144px;transform:scaleX(0.8579)">No</div>
<div class="t" style="left:274px;top:158px;transform:scaleX(0.8902)">(0014)</div>
<div class="t" style="left:326px;top:158px;transform:scaleX(0.9158)">Setup</div>
<div class="t" style="left:506px;top:158px;transform:scaleX(0.8861)">Yes</div>
<div class="t" style="left:556px;top:158px;transform:scaleX(0.8961)">Default</div>
<div class="t" style="left:274px;top:172px;transform:scaleX(0.8259)">(FFFF)</div>
<div class="t" style="left:506px;top:172px;transform:scaleX(0.8579)">No</div>
<div class="t" style="left:274px;top:186px;transform:scaleX(0.8687)">(1B3F)</div>
<div class="t" style="left:326px;top:186px;transform:scaleX(0.9243)">!!!! PCI Resource ERROR !!!!</div>
<div class="t" style="left:506px;top:186px;transform:scaleX(0.8861)">Yes</div>
<div class="t" style="left:556px;top:186px;transform:scaleX(0.8961)">Default</div>
<div class="t" style="left:274px;top:200px;transform:scaleX(0.8259)">(FFFF)</div>
<div class="t" style="left:506px;top:200px;transform:scaleX(0.8579)">No</div>
<div class="t" style="left:274px;top:214px;transform:scaleX(0.8902)">(0403)</div>
<div class="t" style="left:326px;top:214px;transform:scaleX(0.9129)">Recovery</div>
<div class="t" style="left:506px;top:214px;transform:scaleX(0.8861)">Yes</div>
<div class="t" style="left:556px;top:214px;transform:scaleX(0.8961)">Default</div>
<div class="t" style="left:274px;top:228px;transform:scaleX(0.8259)">(FFFF)</div>
<div class="t" style="left:506px;top:228px;transform:scaleX(0.8579)">No</div>
<div class="t" style="left:274px;top:242px;transform:scaleX(0.8259)">(FFFF)</div>
<div class="t" style="left:506px;top:242px;transform:scaleX(0.8861)">Yes</div>
<div class="t" style="left:274px;top:256px;transform:scaleX(0.8259)">(FFFF)</div>
<div class="t" style="left:506px;top:256px;transform:scaleX(0.8579)">No</div>
<div class="t" style="left:274px;top:270px;transform:scaleX(0.8664)">(17AB)</div>
<div class="t" style="left:326px;top:270px;transform:scaleX(0.9106)">IntelRCSetup</div>
<div class="t" style="left:506px;top:270px;transform:scaleX(0.8861)">Yes</div>
<div class="t" style="left:556px;top:270px;transform:scaleX(0.8961)">Default</div>
<div class="r" style="left:18px;top:601px;width:901px;height:1px;background:#a0a0a0;"></div><div class="r" style="left:19px;top:602px;width:900px;height:1px;background:#ffffff;"></div><div class="r" style="left:18px;top:601px;width:1px;height:33px;background:#a0a0a0;"></div><div class="r" style="left:19px;top:602px;width:1px;height:32px;background:#ffffff;"></div><div class="r" style="left:18px;top:634px;width:902px;height:1px;background:#a0a0a0;"></div><div class="r" style="left:18px;top:635px;width:903px;height:1px;background:#ffffff;"></div><div class="r" style="left:919px;top:601px;width:1px;height:34px;background:#a0a0a0;"></div><div class="r" style="left:920px;top:601px;width:1px;height:35px;background:#ffffff;"></div><div class="r" style="left:25px;top:601px;width:86px;height:2px;background:#f0f0f0;"></div><div class="t" style="left:27px;top:596px;transform:scaleX(0.9029)">Menu Help String</div>
<div class="r" style="left:18px;top:647px;width:901px;height:1px;background:#a0a0a0;"></div><div class="r" style="left:19px;top:648px;width:900px;height:1px;background:#ffffff;"></div><div class="r" style="left:18px;top:647px;width:1px;height:41px;background:#a0a0a0;"></div><div class="r" style="left:19px;top:648px;width:1px;height:40px;background:#ffffff;"></div><div class="r" style="left:18px;top:688px;width:902px;height:1px;background:#a0a0a0;"></div><div class="r" style="left:18px;top:689px;width:903px;height:1px;background:#ffffff;"></div><div class="r" style="left:919px;top:647px;width:1px;height:42px;background:#a0a0a0;"></div><div class="r" style="left:920px;top:647px;width:1px;height:43px;background:#ffffff;"></div><div class="r" style="left:25px;top:647px;width:92px;height:2px;background:#f0f0f0;"></div><div class="t" style="left:27px;top:642px;transform:scaleX(0.8896)">Control Help String</div>
<div class="r" style="left:928px;top:613px;width:74px;height:1px;background:#ffffff;"></div><div class="r" style="left:928px;top:613px;width:1px;height:22px;background:#ffffff;"></div><div class="r" style="left:928px;top:635px;width:75px;height:1px;background:#696969;"></div><div class="r" style="left:1002px;top:613px;width:1px;height:23px;background:#696969;"></div><div class="r" style="left:929px;top:634px;width:73px;height:1px;background:#a0a0a0;"></div><div class="r" style="left:1001px;top:614px;width:1px;height:21px;background:#a0a0a0;"></div>
<div class="t" style="left:948px;top:618px;transform:scaleX(0.8908)">LogFile</div>
<div class="r" style="left:928px;top:667px;width:74px;height:1px;background:#ffffff;"></div><div class="r" style="left:928px;top:667px;width:1px;height:22px;background:#ffffff;"></div><div class="r" style="left:928px;top:689px;width:75px;height:1px;background:#696969;"></div><div class="r" style="left:1002px;top:667px;width:1px;height:23px;background:#696969;"></div><div class="r" style="left:929px;top:688px;width:73px;height:1px;background:#a0a0a0;"></div><div class="r" style="left:1001px;top:668px;width:1px;height:21px;background:#a0a0a0;"></div>
<div class="t" style="left:954px;top:673px;color:#ffffff;transform:scaleX(0.8900)">Undo</div>
<div class="r" style="left:954px;top:684px;width:8px;height:1px;background:#ffffff;"></div>
<div class="t" style="left:953px;top:672px;color:#a0a0a0;transform:scaleX(0.8900)">Undo</div>
<div class="r" style="left:953px;top:683px;width:8px;height:1px;background:#a0a0a0;"></div>
<div class="t" style="left:4px;top:736px;font-size:12px;line-height:15px;transform:scaleX(0.9144)">Ready</div>
<div class="r" style="left:904px;top:734px;width:28px;height:1px;background:#a0a0a0;"></div>
<div class="r" style="left:904px;top:734px;width:1px;height:16px;background:#a0a0a0;"></div>
<div class="r" style="left:932px;top:734px;width:1px;height:17px;background:#ffffff;"></div>
<div class="r" style="left:904px;top:750px;width:29px;height:1px;background:#ffffff;"></div>
<div class="r" style="left:935px;top:734px;width:33px;height:1px;background:#a0a0a0;"></div>
<div class="r" style="left:935px;top:734px;width:1px;height:16px;background:#a0a0a0;"></div>
<div class="r" style="left:968px;top:734px;width:1px;height:17px;background:#ffffff;"></div>
<div class="r" style="left:935px;top:750px;width:34px;height:1px;background:#ffffff;"></div>
<div class="r" style="left:971px;top:734px;width:32px;height:1px;background:#a0a0a0;"></div>
<div class="r" style="left:971px;top:734px;width:1px;height:16px;background:#a0a0a0;"></div>
<div class="r" style="left:1003px;top:734px;width:1px;height:17px;background:#ffffff;"></div>
<div class="r" style="left:971px;top:750px;width:33px;height:1px;background:#ffffff;"></div>
<svg class="abs" style="left:1010px;top:738px" width="13" height="13" viewBox="0 0 13 13"><g stroke="#8e8e8e" stroke-width="1.5"><line x1="13" y1="1.5" x2="1.5" y2="13"/><line x1="13" y1="5.5" x2="5.5" y2="13"/><line x1="13" y1="9.5" x2="9.5" y2="13"/></g></svg>
<div class="r" style="left:0px;top:0px;width:1px;height:752px;background:#1883d7;"></div>
<div class="r" style="left:1023px;top:0px;width:1px;height:752px;background:#1883d7;"></div>
<div class="r" style="left:0px;top:751px;width:1024px;height:1px;background:#1883d7;"></div>
<div class="r" style="left:0px;top:0px;width:1024px;height:1px;background:#1883d7;"></div>

</body>
</html>
